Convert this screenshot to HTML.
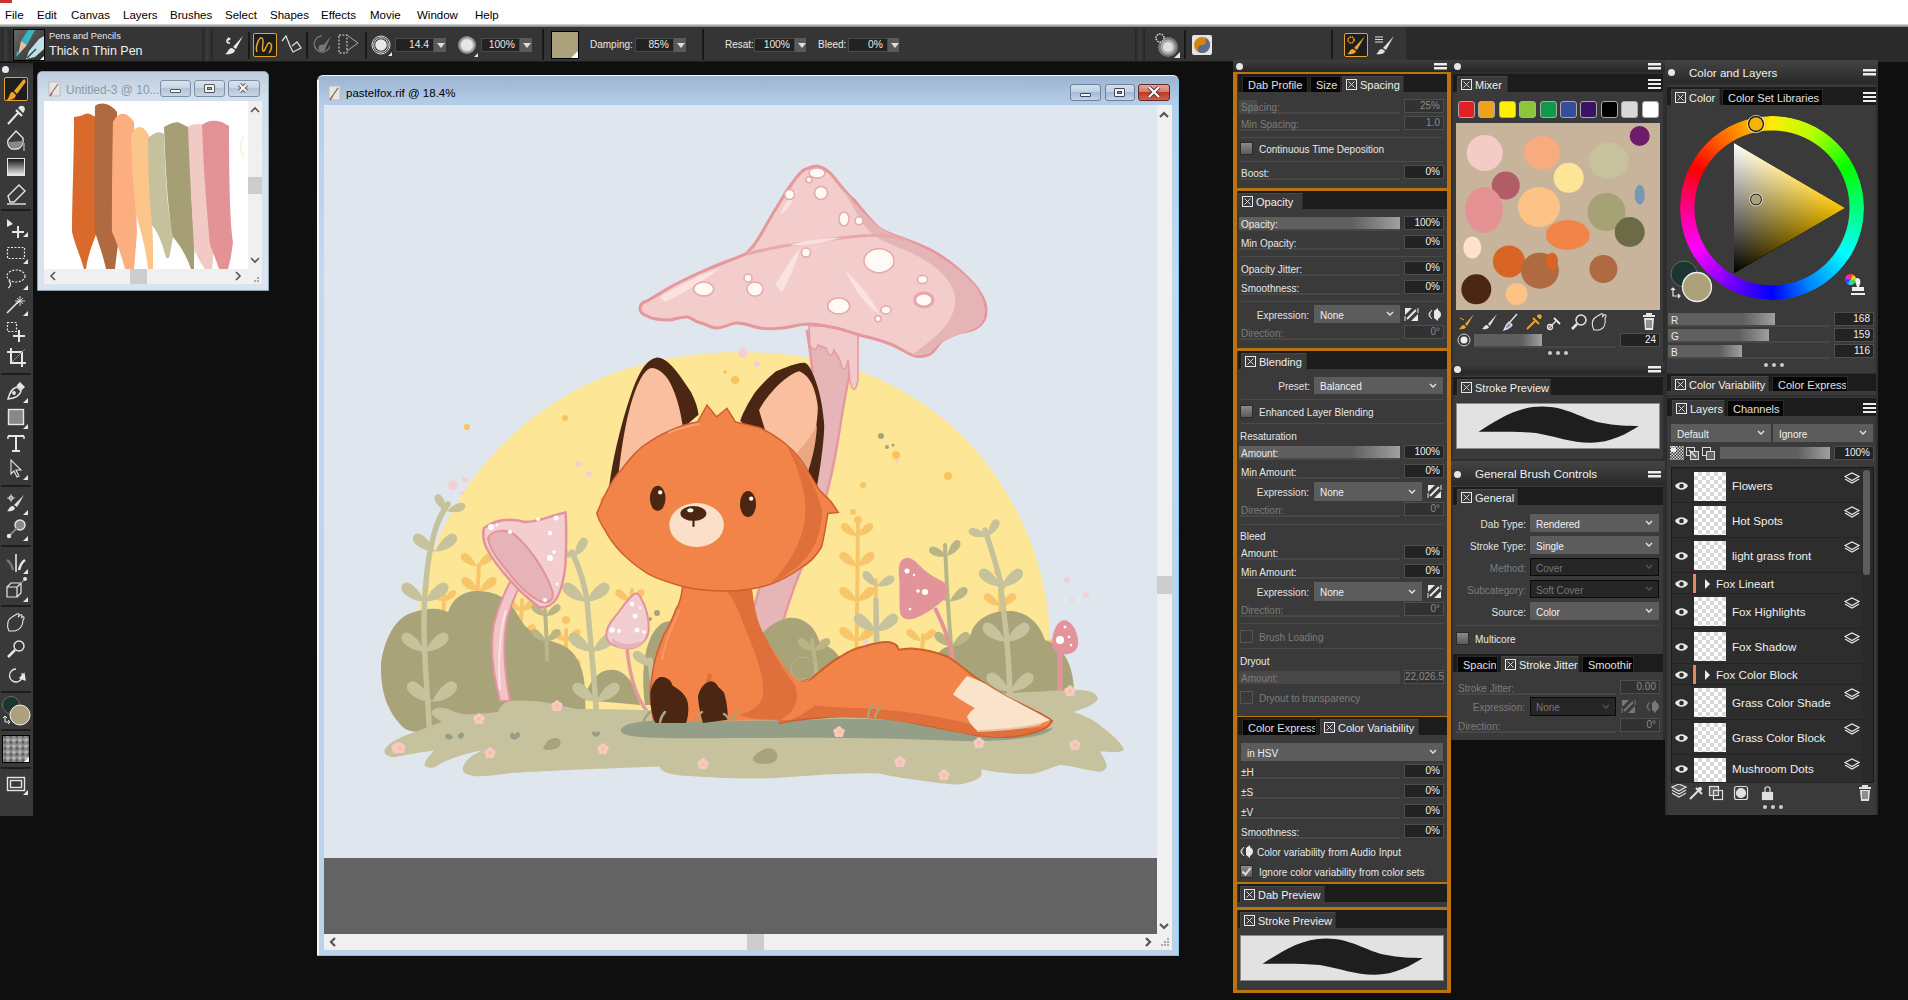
<!DOCTYPE html>
<html><head><meta charset="utf-8">
<style>
*{box-sizing:border-box;margin:0;padding:0}
html,body{width:1908px;height:1000px;overflow:hidden;background:#0f0f0f;font-family:"Liberation Sans",sans-serif;position:relative}
.a{position:absolute}
.t{position:absolute;white-space:nowrap;color:#e6e6e6;font-size:11px;line-height:12px}
#menu{left:0;top:0;width:1908px;height:25px;background:#fff;border-bottom:2px solid #8a8a8a}
#menu span{position:absolute;top:6px;font-size:13px;color:#000;line-height:15px}
#tb{left:0;top:27px;width:1908px;height:35px;background:#353535}
.sep{position:absolute;width:3px;background:#1a1a1a}
.inp{position:absolute;background:#222;border:1px solid #4a4a4a;color:#e8e8e8;font-size:10.3px;text-align:right;padding-right:4px;line-height:12px}
.dd{position:absolute;background:#5a5a5a}
.dd:after{content:"";position:absolute;left:3px;top:5px;border-left:4px solid transparent;border-right:4px solid transparent;border-top:5px solid #ddd}
</style></head><body>

<!-- MENU -->
<div class="a" style="left:0;top:0;width:1908px;height:24px;background:#fff"></div>
<div class="a" style="left:0;top:24px;width:1908px;height:3px;background:linear-gradient(#e0e0e0,#777)"></div>
<div class="a" style="left:0;top:0;width:12px;height:3px;background:#c33"></div>
<div class="t" style="top:8px;font-size:11.5px;line-height:14px;color:#000;left:5px">File</div>
<div class="t" style="top:8px;font-size:11.5px;line-height:14px;color:#000;left:37px">Edit</div>
<div class="t" style="top:8px;font-size:11.5px;line-height:14px;color:#000;left:71px">Canvas</div>
<div class="t" style="top:8px;font-size:11.5px;line-height:14px;color:#000;left:123px">Layers</div>
<div class="t" style="top:8px;font-size:11.5px;line-height:14px;color:#000;left:170px">Brushes</div>
<div class="t" style="top:8px;font-size:11.5px;line-height:14px;color:#000;left:225px">Select</div>
<div class="t" style="top:8px;font-size:11.5px;line-height:14px;color:#000;left:270px">Shapes</div>
<div class="t" style="top:8px;font-size:11.5px;line-height:14px;color:#000;left:321px">Effects</div>
<div class="t" style="top:8px;font-size:11.5px;line-height:14px;color:#000;left:370px">Movie</div>
<div class="t" style="top:8px;font-size:11.5px;line-height:14px;color:#000;left:417px">Window</div>
<div class="t" style="top:8px;font-size:11.5px;line-height:14px;color:#000;left:475px">Help</div>

<!-- TOOLBAR -->
<div id="tb" class="a"></div>
<!-- TOOLBAR DETAIL -->
<div class="a" style="left:0;top:27px;width:1406px;height:35px;background:#353535"></div>
<div class="a" style="left:1406px;top:27px;width:502px;height:35px;background:#2a2a2a"></div>
<div class="a" style="left:0;top:61px;width:1406px;height:1px;background:#1d1d1d"></div>
<div class="a" style="left:1px;top:29px;width:10px;height:32px;background:linear-gradient(90deg,#262626,#3c3c3c 50%,#262626)"></div>
<div class="a" style="left:202px;top:29px;width:11px;height:32px;background:linear-gradient(90deg,#262626,#3c3c3c 50%,#262626)"></div>
<div class="a" style="left:1135px;top:29px;width:10px;height:32px;background:linear-gradient(90deg,#262626,#3c3c3c 50%,#262626)"></div>
<!-- brush category icon -->
<svg class="a" style="left:13px;top:29px" width="32" height="32" viewBox="0 0 32 32">
<defs><linearGradient id="bg1" x1="0" y1="0" x2="1" y2="1"><stop offset="0" stop-color="#6a6a6a"/><stop offset="1" stop-color="#2c2c2c"/></linearGradient></defs>
<rect x="0.5" y="0.5" width="31" height="31" fill="url(#bg1)" stroke="#000"/>
<path d="M15 1 L22 1 L14 16 L8 12 Z" fill="#36b6c0"/>
<path d="M8 12 L14 16 L5 26 Z" fill="#e2c2a4"/>
<path d="M4 22 L7 24 L3 28 Z" fill="#36b6c0"/>
<path d="M26 10 L31 7 L31 20 L22 28 L13 30 L16 22 Z" fill="#bfe0e6"/>
<path d="M14 29 L23 20" stroke="#1d3a44" stroke-width="1.2"/>
<path d="M27 31 L31 27 L31 31 Z" fill="#fff"/>
</svg>
<div class="t" style="left:49px;top:31px;font-size:9.3px;line-height:11px;color:#e8e8e8">Pens and Pencils</div>
<div class="t" style="left:49px;top:44px;font-size:12.5px;line-height:14px;color:#f0f0f0">Thick n Thin Pen</div>
<!-- icons -->
<svg class="a" style="left:222px;top:33px" width="24" height="24" viewBox="0 0 24 24">
<path d="M21 3 L11 14 L14 16 Z" fill="#e8e8e8"/><path d="M10 15 C6 15 6 20 3 21 C8 22 13 20 13 17 Z" fill="#e8e8e8"/>
<path d="M8 6 C4 5 4 10 8 10" stroke="#e8e8e8" stroke-width="1.6" fill="none"/><path d="M6 4 L9 6 L6 8" fill="#e8e8e8"/>
</svg>
<div class="a" style="left:253px;top:33px;width:24px;height:24px;border:1.5px solid #e8a32e;background:#1e1e1e;border-radius:2px"></div>
<svg class="a" style="left:253px;top:33px" width="24" height="24" viewBox="0 0 24 24"><path d="M4 19 C2 14 6 3 9 5 C12 7 8 16 10 18 C12 20 14 8 17 10 C20 12 18 18 16 20" stroke="#e8a32e" stroke-width="1.5" fill="none"/></svg>
<svg class="a" style="left:281px;top:33px" width="22" height="24" viewBox="0 0 22 24"><path d="M1 8 L5 3 L9 13 L12 19 L20 15 L16 9 L11 13" stroke="#dcdcdc" stroke-width="1.3" fill="none"/></svg>
<div class="a" style="left:248px;top:32px;width:2px;height:27px;background:#1a1a1a"></div>
<div class="a" style="left:306px;top:32px;width:2px;height:27px;background:#1a1a1a"></div>
<div class="a" style="left:365px;top:32px;width:2px;height:27px;background:#1a1a1a"></div>
<svg class="a" style="left:313px;top:34px" width="20" height="20" viewBox="0 0 20 20"><path d="M9 2 A8 8 0 1 0 17 12" stroke="#777" stroke-width="1.3" fill="none"/><path d="M18 2 L9 13 L12 15 Z" fill="#777"/><circle cx="9" cy="14" r="3.5" fill="#777"/></svg>
<svg class="a" style="left:338px;top:34px" width="22" height="22" viewBox="0 0 22 22"><rect x="1" y="1" width="8" height="18" stroke="#e8e8e8" stroke-dasharray="2 1.5" fill="none"/><path d="M9 1 L20 9 L9 17" stroke="#aaa" stroke-width="1" fill="none"/></svg>
<svg class="a" style="left:371px;top:35px" width="22" height="22" viewBox="0 0 22 22"><circle cx="10" cy="10" r="9" stroke="#ddd" stroke-width="1" fill="none"/><circle cx="10" cy="10" r="7.3" stroke="#ddd" stroke-width="1" fill="none"/><circle cx="10" cy="10" r="5.8" fill="#e8e8e8"/><path d="M17 21 L21 17 L21 21 Z" fill="#e8e8e8"/></svg>
<div class="inp" style="left:395px;top:38px;width:39px;height:14px">14.4</div><div class="dd" style="left:434px;top:38px;width:12px;height:14px"></div>
<svg class="a" style="left:457px;top:36px" width="22" height="22" viewBox="0 0 22 22"><circle cx="10" cy="9" r="9" fill="#8a8a8a"/><circle cx="10" cy="9" r="7.5" fill="#b0b0b0"/><circle cx="10" cy="9" r="6" fill="#e6e6e6"/><path d="M17 21 L21 17 L21 21 Z" fill="#e8e8e8"/></svg>
<div class="inp" style="left:481px;top:38px;width:39px;height:14px">100%</div><div class="dd" style="left:520px;top:38px;width:12px;height:14px"></div>
<div class="a" style="left:542px;top:29px;width:2px;height:31px;background:#1a1a1a"></div>
<div class="a" style="left:551px;top:31px;width:28px;height:28px;background:#aba27b;border:1.5px solid #000"></div>
<svg class="a" style="left:571px;top:51px" width="7" height="7" viewBox="0 0 7 7"><path d="M0 7 L7 0 L7 7Z" fill="#fff"/></svg>
<div class="t" style="left:590px;top:39px;font-size:10px;color:#e8e8e8">Damping:</div>
<div class="inp" style="left:635px;top:38px;width:39px;height:14px">85%</div><div class="dd" style="left:674px;top:38px;width:12px;height:14px"></div>
<div class="a" style="left:702px;top:29px;width:2px;height:31px;background:#1a1a1a"></div>
<div class="t" style="left:725px;top:39px;font-size:10px;color:#e8e8e8">Resat:</div>
<div class="inp" style="left:754px;top:38px;width:41px;height:14px">100%</div><div class="dd" style="left:795px;top:38px;width:11px;height:14px"></div>
<div class="t" style="left:818px;top:39px;font-size:10px;color:#e8e8e8">Bleed:</div>
<div class="inp" style="left:848px;top:38px;width:40px;height:14px">0%</div><div class="dd" style="left:888px;top:38px;width:11px;height:14px"></div>
<svg class="a" style="left:1155px;top:33px" width="26" height="26" viewBox="0 0 26 26"><circle cx="13" cy="14" r="10" fill="#777"/><circle cx="13" cy="14" r="7.5" fill="#aaa"/><circle cx="13" cy="14" r="5" fill="#e0e0e0"/><circle cx="5" cy="5" r="4" fill="#353535" stroke="#ddd" stroke-width="1.5" stroke-dasharray="1.5 1"/><path d="M19 25 L25 19 L25 25 Z" fill="#e8e8e8"/></svg>
<div class="a" style="left:1184px;top:30px;width:2px;height:29px;background:#1a1a1a"></div>
<div class="a" style="left:1192px;top:35px;width:20px;height:20px;background:#e4e4e4;border-radius:2px"></div>
<svg class="a" style="left:1192px;top:35px" width="20" height="20" viewBox="0 0 20 20"><circle cx="10" cy="10" r="8" fill="#d4860f"/><path d="M10 2 A8 8 0 0 1 10 18 A4 4 0 0 1 10 10 A4 4 0 0 0 10 2 Z" fill="#5e6a8e"/></svg>
<div class="a" style="left:1331px;top:30px;width:2px;height:29px;background:#1a1a1a"></div>
<div class="a" style="left:1344px;top:33px;width:24px;height:24px;border:1.5px solid #e8a32e;background:#1e1e1e;border-radius:2px"></div>
<svg class="a" style="left:1344px;top:33px" width="24" height="24" viewBox="0 0 24 24"><path d="M21 3 L10 15 L13 17 Z" fill="#f0a32a"/><path d="M9 16 C5 16 6 20 3 21 C8 22 12 20 12 18 Z" fill="#f0a32a"/><circle cx="7" cy="7" r="3" stroke="#f0a32a" stroke-width="1.6" fill="none" stroke-dasharray="1.6 0.8"/></svg>
<svg class="a" style="left:1374px;top:34px" width="22" height="22" viewBox="0 0 22 22"><path d="M20 2 L9 14 L12 16 Z" fill="#e0e0e0"/><path d="M8 15 C4 15 5 19 2 20 C7 21 11 19 11 17 Z" fill="#e0e0e0"/><path d="M1 3 H9 M1 5.5 H9 M1 8 H9" stroke="#e0e0e0" stroke-width="1"/></svg>


<!-- LEFT TOOLBOX -->

<!-- TOOLBOX -->
<div class="a" style="left:0;top:63px;width:33px;height:753px;background:#393939"></div>
<div class="a" style="left:0;top:63px;width:33px;height:10px;background:linear-gradient(#2c2c2c,#3a3a3a)"></div>
<div class="a" style="left:2px;top:66px;width:7px;height:7px;border-radius:50%;background:#e8e8e8"></div>
<div class="a" style="left:4px;top:77px;width:24px;height:24px;border:1.5px solid #e8a32e;background:#1e1e1e;border-radius:2px"></div>
<svg class="a" style="left:0;top:63px" width="33" height="753" viewBox="0 63 33 753">
<g fill="none" stroke="#e6e6e6" stroke-width="1.4">
<!-- brush -->
<path d="M25 80 C26 81 26 82 25 83 L17 94 L14 91 L23 80 C24 79 25 79 25 80 Z" fill="#f0a32a" stroke="none"/><path d="M13 92 L16 95 C15 99 12 100 7 100 C9 98 9 96 10 94 C11 92 12 92 13 92 Z" fill="#f0a32a" stroke="none"/>
<!-- dropper -->
<path d="M8 124 L18 113" stroke-width="2"/><path d="M16 110 L22 116" stroke-width="2.2"/><path d="M19 108 C22 104 26 108 23 112 Z" fill="#e6e6e6"/>
<!-- bucket -->
<path d="M8 140 L16 131 L23 138 C24 143 21 149 16 149 L12 149 C9 148 7 144 8 140 Z"/><path d="M9 142 L23 141 C22 146 20 148 16 148 L12 148 C10 147 9 145 9 142 Z" fill="#888" stroke="none"/><path d="M24 143 L24 151" stroke="#999" stroke-width="1.6"/>
<!-- eraser -->
<path d="M8 196 L19 185 L25 191 L14 202 L10 202 Z"/><path d="M7 204 H26" />
<!-- transform -->
<path d="M7 219 L7 227 L13 224 Z" fill="#e6e6e6" stroke="none"/><path d="M18 226 V238 M12 232 H24" stroke-width="2"/><path d="M23 237 L28 232 L28 237 Z" fill="#e6e6e6" stroke="none"/>
<!-- rect select -->
<rect x="7.5" y="247.5" width="17" height="11" stroke-dasharray="2 1.5" stroke-width="1.2"/><path d="M23 264 L28 259 L28 264 Z" fill="#e6e6e6" stroke="none"/>
<!-- lasso -->
<ellipse cx="16" cy="276" rx="9" ry="6" stroke-dasharray="2 1.5" stroke-width="1.2"/><path d="M9 281 C12 284 10 287 8 288" stroke-width="1.2"/><path d="M23 290 L28 285 L28 290 Z" fill="#e6e6e6" stroke="none"/>
<!-- wand -->
<path d="M7 313 L19 301" stroke-width="1.6"/><path d="M20 296 V306 M15 301 H25 M17 298 L23 304 M23 298 L17 304" stroke-width="0.9"/><path d="M23 316 L28 311 L28 316 Z" fill="#e6e6e6" stroke="none"/>
<!-- sel adjust -->
<rect x="7.5" y="322.5" width="9" height="9" stroke-dasharray="2 1.5" stroke-width="1.2"/><path d="M19 330 V342 M13 336 H25" stroke-width="2"/>
<!-- crop -->
<path d="M11 348 V363 H26 M7 352 H22 V367" stroke-width="2"/><path d="M12 362 L25 349" stroke="#888" stroke-width="1"/>
<!-- pen -->
<path d="M8 399 C10 392 12 388 17 387 L21 391 C20 396 16 398 8 399 Z"/><path d="M17 386 L20 383 L24 387 L21 390" fill="#e6e6e6"/><circle cx="14" cy="393" r="1.2" fill="#e6e6e6"/><path d="M23 403 L28 398 L28 403 Z" fill="#e6e6e6" stroke="none"/>
<!-- rect shape -->
<rect x="8.5" y="409.5" width="15" height="15" fill="#888"/><path d="M23 429 L28 424 L28 429 Z" fill="#e6e6e6" stroke="none"/>
<!-- T -->
<path d="M8 436 H24 M16 436 V451 M12 451 H20" stroke-width="2"/><path d="M8 436 V439 M24 436 V439" stroke-width="1.5"/>
<!-- arrow -->
<path d="M11 460 L11 474 L14 471 L17 477 L19 476 L16 470 L21 470 Z" stroke-width="1.1"/><path d="M23 480 L28 475 L28 480 Z" fill="#e6e6e6" stroke="none"/>
<!-- clone brush -->
<path d="M24 495 L14 505 L17 507 Z" fill="#e6e6e6" stroke="none"/><path d="M13 506 C9 506 9 510 7 511 C11 512 15 510 15 508 Z" fill="#e6e6e6" stroke="none"/><circle cx="11" cy="498" r="2" stroke-width="1"/><path d="M11 494 V502 M7 498 H15" stroke-width="0.8"/><path d="M23 515 L28 510 L28 515 Z" fill="#e6e6e6" stroke="none"/>
<!-- cloner -->
<circle cx="20" cy="525" r="5" fill="#888"/><path d="M9 536 L17 528" stroke="#888" stroke-width="1.8"/><circle cx="9" cy="536" r="2.2" fill="#e6e6e6" stroke="none"/><path d="M23 541 L28 536 L28 541 Z" fill="#e6e6e6" stroke="none"/>
<!-- symmetry -->
<path d="M16 554 V572" stroke-width="1.6"/><path d="M7 560 C10 562 12 566 13 570" stroke="#777" stroke-width="2.5"/><path d="M25 560 C22 562 20 566 19 570" stroke-width="2.5"/><path d="M23 574 L28 569 L28 574 Z" fill="#e6e6e6" stroke="none"/>
<!-- cube -->
<path d="M7 587 H17 V597 H7 Z M7 587 L11 583 H21 L17 587 M21 583 V593 L17 597" stroke-width="1.2"/><path d="M20 584 L25 579" stroke="#aaa" stroke-dasharray="1.5 1.5"/><circle cx="25" cy="579" r="2" fill="#e6e6e6" stroke="none"/><path d="M23 602 L28 597 L28 602 Z" fill="#e6e6e6" stroke="none"/>
<!-- hand -->
<path d="M9 631 C6 625 8 619 12 617 L17 614 C19 613 20 615 18 617 L20 615 C22 614 23 616 21 618 L22 617 C24 616 25 618 23 620 C23 625 20 630 15 631 Z" stroke-width="1.1"/>
<!-- magnifier -->
<circle cx="19" cy="646" r="5"/><path d="M15 650 L8 657" stroke-width="2.5"/>
<!-- rotate -->
<path d="M22 673 A6.5 6.5 0 1 1 16 669" stroke-width="1.3"/><path d="M20 678 L24 674 L25 680 Z" fill="#e6e6e6"/>
<!-- screen mode -->
<rect x="7.5" y="777.5" width="17" height="13"/><rect x="10.5" y="780.5" width="11" height="7"/><path d="M23 795 L28 790 L28 795 Z" fill="#e6e6e6" stroke="none"/>
</g>
<!-- gradient rect -->
<defs><linearGradient id="grd" x1="0" y1="0" x2="0" y2="1"><stop offset="0" stop-color="#111"/><stop offset="1" stop-color="#f0f0f0"/></linearGradient>
<pattern id="ppr" width="6" height="6" patternUnits="userSpaceOnUse"><rect width="6" height="6" fill="#8a8a8a"/><circle cx="2" cy="2" r="1.6" fill="#bdbdbd"/><circle cx="5" cy="4.5" r="1.4" fill="#5e5e5e"/></pattern></defs>
<rect x="7.5" y="158.5" width="17" height="17" fill="url(#grd)" stroke="#e6e6e6"/>
<!-- seps -->
<g fill="#1d1d1d"><rect x="1" y="209" width="30" height="2"/><rect x="1" y="373" width="30" height="2"/><rect x="1" y="485" width="30" height="2"/><rect x="1" y="545" width="30" height="2"/><rect x="1" y="605" width="30" height="2"/><rect x="1" y="691" width="30" height="2"/><rect x="1" y="729" width="30" height="2"/><rect x="1" y="767" width="30" height="2"/></g>
<!-- colors -->
<circle cx="11" cy="705" r="8.5" fill="#1b3532" stroke="#777" stroke-width="0.8"/>
<circle cx="20" cy="715" r="10" fill="#aba27b" stroke="#eee" stroke-width="1"/>
<path d="M5 716 V722 H10 M3 718 L5 716 L7 718 M8 720 L10 722 L8 724" stroke="#e6e6e6" stroke-width="1" fill="none"/>
<rect x="2.5" y="735.5" width="27" height="27" fill="url(#ppr)" stroke="#000"/>
<path d="M24 762 L29 757 L29 762 Z" fill="#fff"/>
</svg>



<!-- UNTITLED WINDOW -->
<!-- UNTITLED WINDOW -->
<div class="a" style="left:37px;top:71px;width:232px;height:220px;background:linear-gradient(#bccddf,#d3e0ec 25px,#d9e4ef);border-radius:5px 5px 0 0;border:1px solid #8ea3b8"></div>
<svg class="a" style="left:48px;top:81px" width="14" height="16" viewBox="0 0 14 16"><path d="M1 1 H12 V15 H1 Z" fill="#e6e6e6" stroke="#bbb"/><path d="M3 13 L10 3" stroke="#9a6a5a" stroke-width="1.2"/><path d="M2 15 L4 12" stroke="#d44" stroke-width="1.5"/></svg>
<div class="t" style="left:66px;top:83px;font-size:12px;line-height:14px;color:#8e98a4">Untitled-3 @ 10...</div>
<div class="a" style="left:160px;top:80px;width:31px;height:17px;border:1px solid #7f90a4;border-radius:3px;background:linear-gradient(#dae4ef,#c5d3e2 50%,#b2c4d8 50%,#c9d7e6)"></div>
<div class="a" style="left:194px;top:80px;width:31px;height:17px;border:1px solid #7f90a4;border-radius:3px;background:linear-gradient(#dae4ef,#c5d3e2 50%,#b2c4d8 50%,#c9d7e6)"></div>
<div class="a" style="left:228px;top:80px;width:32px;height:17px;border:1px solid #7f90a4;border-radius:3px;background:linear-gradient(#dae4ef,#c5d3e2 50%,#b2c4d8 50%,#c9d7e6)"></div>
<div class="a" style="left:170px;top:89px;width:11px;height:4px;background:#f4f4f4;border:1px solid #555;border-radius:1px"></div>
<div class="a" style="left:204px;top:84px;width:11px;height:9px;background:#f4f4f4;border:1px solid #555;border-radius:1px"></div>
<div class="a" style="left:207px;top:87px;width:5px;height:3px;background:#8aa;border:1px solid #555"></div>
<svg class="a" style="left:236px;top:82px" width="14" height="12" viewBox="0 0 14 12"><path d="M3.5 2.5 L10.5 9.5 M10.5 2.5 L3.5 9.5" stroke="#555" stroke-width="4.2"/><path d="M3.5 2.5 L10.5 9.5 M10.5 2.5 L3.5 9.5" stroke="#f4f4f4" stroke-width="2.4"/></svg>
<div class="a" style="left:44px;top:101px;width:204px;height:168px;background:#fff;overflow:hidden">
<svg width="204" height="168" viewBox="44 101 204 168">
<path d="M90 114 C86 112 82 116 80 116 L74 117 C74 160 72 200 72 232 C75 245 80 255 84 269 L86 269 C88 255 92 245 97 232 C97 200 97 160 97 118 Z" fill="#d96a2b"/>
<path d="M95 106 C103 100 113 106 117 112 C117 160 118 200 120 232 C118 245 116 258 115 269 L106 269 C103 255 99 245 95 232 C94 200 94 160 95 106 Z" fill="#b06a42"/>
<path d="M113 122 C118 112 126 110 134 122 C136 170 136 210 137 232 C136 245 135 258 134 269 L125 269 C121 255 118 245 112 232 C112 200 112 170 113 122 Z" fill="#fdae80"/>
<path d="M131 135 C136 124 144 124 150 138 C151 190 152 220 153 245 L153 269 L148 269 C146 250 141 230 136 215 C134 190 132 170 131 135 Z" fill="#fcc58a"/>
<path d="M148 138 C154 133 158 130 164 134 C166 190 168 220 174 232 C172 242 170 255 169 258 L166 258 C163 245 158 232 152 225 C150 200 148 180 148 138 Z" fill="#c5c19c"/>
<path d="M164 127 C170 124 176 120 182 124 L190 128 C191 190 192 220 195 240 C194 250 194 262 194 269 L191 269 C186 255 180 245 173 237 C168 210 166 180 164 127 Z" fill="#a69f75"/>
<path d="M188 127 C194 123 200 124 206 125 C208 200 210 230 214 248 C213 255 213 262 212 269 L205 269 C200 262 196 255 194 248 C192 210 190 180 188 127 Z" fill="#f2cac5"/>
<path d="M202 125 C208 120 214 120 222 122 L229 126 C229 200 231 230 233 242 C232 252 230 262 228 269 L219 269 C216 260 213 252 210 245 C207 210 204 180 202 125 Z" fill="#e39396"/>
<path d="M244 136 C240 140 240 150 243 157" stroke="#fbeed0" stroke-width="1.5" fill="none"/>
</svg>
</div>
<!-- scrollbars -->
<div class="a" style="left:248px;top:101px;width:14px;height:168px;background:#f0f0f0"></div>
<div class="a" style="left:248px;top:177px;width:14px;height:17px;background:#cdcdcd"></div>
<div class="a" style="left:44px;top:269px;width:204px;height:15px;background:#f0f0f0"></div>
<div class="a" style="left:130px;top:269px;width:17px;height:15px;background:#cdcdcd"></div>
<div class="a" style="left:248px;top:269px;width:14px;height:15px;background:#f0f0f0"></div>
<svg class="a" style="left:0;top:0" width="280" height="300" viewBox="0 0 280 300">
<g stroke="#555" stroke-width="1.6" fill="none"><path d="M251 112 L255 108 L259 112"/><path d="M251 258 L255 262 L259 258"/><path d="M55 272 L51 276 L55 280"/><path d="M236 272 L240 276 L236 280"/></g>
<g fill="#aaa"><rect x="257" y="280" width="2" height="2"/><rect x="254" y="280" width="2" height="2"/><rect x="257" y="277" width="2" height="2"/></g>
</svg>



<!-- MAIN CANVAS WINDOW -->
<div class="a" style="left:317px;top:75px;width:862px;height:881px;background:linear-gradient(#9cb4d1,#b6cfe9 30px,#c4d8ee 200px,#bcd3ea 600px,#bcd2ea);border-radius:6px 6px 0 0;border:1px solid #7fc3ea;border-top-color:#f4f8fc"></div>
<div class="a" style="left:317px;top:80px;width:1.5px;height:875px;background:#f5f8fb"></div>
<svg class="a" style="left:328px;top:85px" width="14" height="16" viewBox="0 0 14 16"><path d="M1 1 H12 V15 H1 Z" fill="#e6e6e6" stroke="#bbb"/><path d="M3 13 L10 3" stroke="#7a5a4a" stroke-width="1.2"/><path d="M2 15 L4 12" stroke="#d44" stroke-width="1.5"/></svg>
<div class="t" style="left:346px;top:86px;font-size:11.5px;line-height:15px;color:#000">pastelfox.rif @ 18.4%</div>
<div class="a" style="left:1070px;top:84px;width:31px;height:17px;border:1px solid #6f8196;border-radius:3px;background:linear-gradient(#d3dff0,#bdd0e6 50%,#a3bbd6 50%,#c1d4ea)"></div>
<div class="a" style="left:1105px;top:84px;width:30px;height:17px;border:1px solid #6f8196;border-radius:3px;background:linear-gradient(#d3dff0,#bdd0e6 50%,#a3bbd6 50%,#c1d4ea)"></div>
<div class="a" style="left:1138px;top:84px;width:32px;height:17px;border:1px solid #5a2a2a;border-radius:3px;background:linear-gradient(#e7a89c,#d77a69 45%,#bf3a22 50%,#d0604a)"></div>
<div class="a" style="left:1080px;top:93px;width:11px;height:4px;background:#f4f4f4;border:1px solid #445;border-radius:1px"></div>
<div class="a" style="left:1114px;top:88px;width:11px;height:9px;background:#f4f4f4;border:1px solid #445;border-radius:1px"></div>
<div class="a" style="left:1117px;top:91px;width:5px;height:3px;background:#7b90aa;border:1px solid #445"></div>
<svg class="a" style="left:1147px;top:86px" width="14" height="12" viewBox="0 0 14 12"><path d="M2 1 L12 11 M12 1 L2 11" stroke="#5a3030" stroke-width="4"/><path d="M2 1 L12 11 M12 1 L2 11" stroke="#fafafa" stroke-width="2.2"/></svg>
<div class="a" style="left:324px;top:105px;width:833px;height:754px;background:#dfe6ed"></div>

<div class="a" style="left:324px;top:858px;width:833px;height:76px;background:#636363"></div>
<div class="a" style="left:1157px;top:105px;width:15px;height:829px;background:#f0f0f0"></div>
<div class="a" style="left:1157px;top:576px;width:15px;height:18px;background:#cdcdcd"></div>
<div class="a" style="left:324px;top:934px;width:848px;height:16px;background:#f0f0f0"></div>
<div class="a" style="left:747px;top:934px;width:17px;height:16px;background:#cdcdcd"></div>
<svg class="a" style="left:0;top:0" width="1200" height="960" viewBox="0 0 1200 960">
<g stroke="#555" stroke-width="2.2" fill="none"><path d="M1160 117 L1164 113 L1168 117"/><path d="M1160 924 L1164 928 L1168 924"/><path d="M335 938 L331 942 L335 946"/><path d="M1146 938 L1150 942 L1146 946"/></g>
<g fill="#aaa"><rect x="1167" y="944" width="2" height="2"/><rect x="1164" y="944" width="2" height="2"/><rect x="1167" y="941" width="2" height="2"/><rect x="1161" y="944" width="2" height="2"/><rect x="1164" y="941" width="2" height="2"/><rect x="1167" y="938" width="2" height="2"/></g>
</svg>


<!--ILLUS-->
<svg class="a" style="left:0;top:0" width="1908" height="1000" viewBox="0 0 1908 1000">
<defs><clipPath id="cv"><rect x="324" y="105" width="833" height="753"/></clipPath>
<g id="lf"><path d="M0 1 C-3 -5 -7 -10 -11 -11 C-15 -11 -16 -7 -13 -4 C-10 -1 -5 1 0 1 Z"/><path d="M0 1 C3 -5 7 -10 11 -11 C15 -11 16 -7 13 -4 C10 -1 5 1 0 1 Z"/></g>
<g id="fl"><circle cx="0" cy="-3.2" r="2.6"/><circle cx="3" cy="-1" r="2.6"/><circle cx="1.9" cy="2.6" r="2.6"/><circle cx="-1.9" cy="2.6" r="2.6"/><circle cx="-3" cy="-1" r="2.6"/><circle cx="0" cy="0" r="1.8" fill="#f8c46c"/></g>
</defs>
<g clip-path="url(#cv)">
<rect x="324" y="105" width="833" height="753" fill="#dfe6ed"/>
<!-- sun -->
<path d="M412 720 L416 633 C420 520 520 352 740 352 C960 352 1045 520 1050 633 L1056 720 Z" fill="#fde797"/>
<!-- dots -->
<g fill="#f3d0d2"><circle cx="743" cy="353" r="5"/><circle cx="757" cy="364" r="3"/><circle cx="453" cy="485" r="5"/><circle cx="465" cy="480" r="3"/><circle cx="462" cy="493" r="2"/><circle cx="578" cy="464" r="3"/><circle cx="589" cy="474" r="3"/><circle cx="866" cy="643" r="3"/><circle cx="1067" cy="580" r="3"/><circle cx="1086" cy="595" r="3"/><circle cx="1072" cy="600" r="2"/><circle cx="467" cy="607" r="4"/><circle cx="897" cy="461" r="2"/></g>
<g fill="#f9c35e"><circle cx="565" cy="418" r="3"/><circle cx="735" cy="380" r="4"/><circle cx="725" cy="372" r="2"/><circle cx="896" cy="455" r="4"/><circle cx="948" cy="476" r="4"/><circle cx="863" cy="485" r="3"/><circle cx="603" cy="500" r="3"/><circle cx="467" cy="427" r="3"/></g>
<g fill="#a6a27a"><circle cx="881" cy="436" r="3"/><circle cx="887" cy="447" r="2"/><circle cx="893" cy="445" r="1.5"/><circle cx="657" cy="613" r="3"/><circle cx="650" cy="619" r="2"/></g>
<!-- yellow plants behind -->
<g stroke="#f8c66a" stroke-width="4" fill="none" stroke-linecap="round">
<path d="M443 640 L444 595"/><path d="M476 620 L479 565"/><path d="M566 700 L566 630"/><path d="M628 640 L632 590"/><path d="M856 700 L858 525"/><path d="M875 700 L876 580"/><path d="M1000 700 L1000 590"/><path d="M920 690 L923 635"/><path d="M520 650 L522 600"/><path d="M810 700 L812 640"/><path d="M1040 690 L1042 640"/>
</g>
<g fill="#f8c66a">
<use href="#lf" transform="translate(443 600) scale(0.9)"/><use href="#lf" transform="translate(443 622) scale(0.9)"/>
<use href="#lf" transform="translate(477 565) scale(1.1)"/><use href="#lf" transform="translate(479 590) scale(1.2)"/>
<use href="#lf" transform="translate(566 640) scale(1)"/><use href="#lf" transform="translate(566 670) scale(1)"/>
<use href="#lf" transform="translate(630 600) scale(1)"/><use href="#lf" transform="translate(630 625) scale(1)"/>
<use href="#lf" transform="translate(857 535) scale(1.1)"/><use href="#lf" transform="translate(857 565) scale(1.2)"/><use href="#lf" transform="translate(857 600) scale(1.2)"/><use href="#lf" transform="translate(857 640) scale(1.2)"/><use href="#lf" transform="translate(857 680) scale(1.2)"/>
<use href="#lf" transform="translate(1000 605) scale(1.1)"/><use href="#lf" transform="translate(1000 640) scale(1.2)"/><use href="#lf" transform="translate(1000 675) scale(1.2)"/>
<use href="#lf" transform="translate(921 640) scale(1)"/><use href="#lf" transform="translate(921 670) scale(1)"/>
<use href="#lf" transform="translate(521 610) scale(1)"/><use href="#lf" transform="translate(521 635) scale(1)"/>
<use href="#lf" transform="translate(811 650) scale(1)"/><use href="#lf" transform="translate(1041 650) scale(1)"/>
<circle cx="566" cy="620" r="4"/><circle cx="858" cy="520" r="4"/><circle cx="853" cy="512" r="3"/><circle cx="1003" cy="585" r="4"/><circle cx="997" cy="572" r="3"/>
</g>
<!-- big mushroom stem -->
<path d="M807 331 C812 360 816 400 814 440 C808 500 780 545 762 580 C752 610 746 640 742 690 L772 690 C776 640 785 610 800 572 C818 530 830 490 838 440 C844 400 852 360 859 331 Z" fill="#e6b5b8" stroke="#e69aa0" stroke-width="2.5"/>
<path d="M809 326 L858 326 L858 380 C856 392 852 393 850 380 L848 360 C846 372 842 372 840 360 L834 350 C832 358 828 356 826 348 L818 345 C816 352 812 350 810 345 Z" fill="#f2cacb" stroke="#e69aa0" stroke-width="1.5"/>
<!-- bushes -->
<g fill="#a8a378">
<path d="M445 730 C425 733 410 733 404 728 C390 715 380 695 381 664 C384 640 395 618 411 613 C430 607 440 608 448 612 C452 598 465 590 479 591 C500 592 510 600 522 622 C530 634 548 640 560 644 C575 650 584 665 585 690 L586 740 Z"/>
<path d="M645 705 C640 670 645 630 665 622 C680 618 690 630 690 660 L690 705 Z"/>
<path d="M735 715 C735 670 755 625 788 618 C805 616 818 630 820 645 C835 645 850 660 850 715 Z"/>
<path d="M930 715 C925 680 930 650 950 646 C962 644 970 640 972 630 C980 615 995 610 1012 611 C1030 613 1040 625 1045 640 C1060 645 1073 660 1074 690 L1074 715 Z"/>
<path d="M585 700 C588 680 600 668 615 670 C628 672 638 690 640 705 Z"/>
</g>
<!-- light olive plants -->
<g stroke="#c6c29c" stroke-width="5.5" fill="none" stroke-linecap="round">
<path d="M430 740 C428 700 424 660 424 624 C424 590 428 560 431 547 C435 525 442 512 448 504"/>
<path d="M597 725 C595 680 590 640 587 600 C584 580 578 565 572 552"/>
<path d="M660 720 C655 700 652 680 650 660"/>
<path d="M880 705 C878 670 876 640 876 600"/>
<path d="M1010 710 C1010 660 1005 620 1000 580 C995 560 990 545 985 530"/>

</g>
<g stroke="#b9b587" stroke-width="4" fill="none" stroke-linecap="round"><path d="M955 690 C952 660 948 620 945 545"/><path d="M820 700 C818 680 815 660 812 640"/><path d="M547 660 C547 640 546 625 545 610"/></g>
<g fill="#b9b587"><use href="#lf" transform="translate(947 555) rotate(-15) scale(1.1)"/><use href="#lf" transform="translate(950 600) scale(1.2)"/><use href="#lf" transform="translate(952 645) scale(1.2)"/><use href="#lf" transform="translate(814 650) scale(1.1)"/><use href="#lf" transform="translate(817 690) scale(1.1)"/><use href="#lf" transform="translate(546 615) scale(1)"/><use href="#lf" transform="translate(546 640) scale(1)"/></g>
<g fill="#c6c29c">
<use href="#lf" transform="translate(447 510) rotate(20) scale(1.1)"/><use href="#lf" transform="translate(435 550) scale(1.5)"/><use href="#lf" transform="translate(425 600) scale(1.6)"/><use href="#lf" transform="translate(425 650) scale(1.6)"/><use href="#lf" transform="translate(432 700) scale(1.7)"/>
<use href="#lf" transform="translate(574 555) rotate(-20) scale(1.2)"/><use href="#lf" transform="translate(586 600) scale(1.6)"/><use href="#lf" transform="translate(592 650) scale(1.6)"/><use href="#lf" transform="translate(596 700) scale(1.6)"/>
<use href="#lf" transform="translate(652 665) scale(1.3)"/>
<use href="#lf" transform="translate(877 585) rotate(10) scale(1.1)"/><use href="#lf" transform="translate(876 630) scale(1.5)"/><use href="#lf" transform="translate(878 670) scale(1.5)"/>
<use href="#lf" transform="translate(987 535) rotate(-20) scale(1.1)"/><use href="#lf" transform="translate(1001 585) scale(1.5)"/><use href="#lf" transform="translate(1006 640) scale(1.6)"/><use href="#lf" transform="translate(1010 690) scale(1.6)"/>

</g>
<!-- big mushroom cap -->
<path d="M817 166 C828 168 833 176 836 180 C842 188 848 195 855 201 C862 210 866 215 871 220 C875 225 878 228 882 230 C890 234 896 236 904 239 C915 243 922 246 931 250 C942 256 950 262 958 269 C966 276 972 282 977 288 C982 296 986 302 986 309 C986 316 985 320 982 323 C978 328 973 330 968 331 C960 333 955 334 950 336 C945 338 942 340 939 344 C935 350 932 354 928 355 C922 357 915 357 912 355 C905 352 898 347 890 344 C880 340 872 338 863 336 C852 333 845 330 836 328 C826 326 818 324 809 324 C800 324 792 327 782 328 C774 329 766 329 760 328 C752 327 744 322 736 323 C728 324 724 328 717 328 C710 328 706 324 701 323 C695 322 692 318 688 317 C680 316 675 320 669 320 C660 320 652 319 647 316 C642 314 640 312 640 309 C640 305 643 302 647 301 C656 296 665 290 674 285 C684 280 692 276 701 272 C710 268 720 264 728 261 C736 258 742 256 747 253 C752 248 756 243 760 236 C766 226 771 216 777 207 C782 198 787 190 793 182 C798 175 802 170 806 169 C810 167 813 166 817 166 Z" fill="#f3cdcb" stroke="#e5979b" stroke-width="3"/>
<path d="M836 180 C848 195 860 210 871 220 C878 228 890 234 904 239 C930 250 958 265 977 288 C986 302 987 318 980 325 C970 333 955 334 939 344 C932 352 922 357 912 355 C930 340 950 330 955 305 C958 285 940 265 905 250 C880 240 870 235 862 222 C852 205 845 192 836 180 Z" fill="#e5b4b6"/>
<path d="M747 254 C780 245 820 240 860 236 C880 234 895 236 905 240" stroke="#e7a9ac" stroke-width="3" fill="none"/>
<g fill="#fbe5e3" opacity="0.9"><path d="M660 297 C680 285 700 275 720 268 C705 280 685 292 665 302 Z"/><path d="M775 285 C785 270 790 260 800 248 C797 262 790 278 782 292 Z"/><path d="M845 270 C855 280 870 295 880 315 C865 305 855 290 845 270 Z"/><path d="M790 245 C805 240 822 238 840 238 C822 243 805 246 790 245 Z"/><path d="M780 215 C784 205 790 195 797 190 C794 200 788 210 780 215 Z"/></g>
<g fill="#fffaf6" stroke="#e8a7aa" stroke-width="1.5">
<ellipse cx="879" cy="260.7" rx="15" ry="12"/><ellipse cx="703.7" cy="289" rx="10" ry="7"/><ellipse cx="755" cy="289" rx="8" ry="7"/><ellipse cx="748" cy="278" rx="4" ry="4"/><ellipse cx="838.7" cy="306" rx="11" ry="8"/><ellipse cx="923.8" cy="299.9" rx="9" ry="7" stroke-width="3"/><ellipse cx="922.5" cy="279.6" rx="5" ry="4"/><ellipse cx="821" cy="193" rx="6.5" ry="6.5"/><ellipse cx="789.6" cy="194.6" rx="5" ry="5"/><ellipse cx="844" cy="219" rx="5" ry="7"/><ellipse cx="859" cy="220.8" rx="4" ry="4"/><ellipse cx="806" cy="252.6" rx="4.5" ry="4.5"/><ellipse cx="817" cy="173" rx="8" ry="5"/><ellipse cx="809" cy="179.7" rx="3" ry="3"/><ellipse cx="886" cy="309.9" rx="5" ry="4"/><ellipse cx="878" cy="318.8" rx="3" ry="3"/>
</g>
<!-- left tilted mushroom -->
<path d="M524 559 C512 575 500 600 494 624 C490 645 492 670 500 701 L510 701 C504 670 503 645 506 624 C511 600 522 580 534 563 Z" fill="#f0c4c8" stroke="#e3939a" stroke-width="2"/>
<path d="M500 690 C498 660 500 630 506 610" stroke="#fbe3e5" stroke-width="2" fill="none"/>
<path d="M484 528 C495 520 510 518 525 522 C540 522 552 515 565.5 512.4 C567 530 566 550 565.5 564 C564 580 560 595 553.5 602.4 C548 607 543 608 539 607 C530 600 522 593 515 585.6 C505 575 496 565 488.8 552 C484 545 482 538 484 528 Z" fill="#f3cdcf" stroke="#e3939a" stroke-width="2.5"/>
<path d="M488 538 C492 530 505 528 515 535 C530 548 545 570 552 590 C555 598 550 604 542 602 C530 597 518 585 508 572 C498 560 490 550 488 538 Z" fill="#e5b3b8" stroke="#e3939a" stroke-width="2"/>
<g fill="#fff"><circle cx="491" cy="527" r="3"/><circle cx="497" cy="525" r="1.5"/><circle cx="510" cy="532" r="2"/><circle cx="550" cy="533" r="2.2"/><circle cx="550" cy="558" r="3"/><circle cx="554" cy="552" r="1.8"/><circle cx="557" cy="584" r="1.5"/><circle cx="545" cy="600" r="2"/><circle cx="538" cy="519" r="2"/><circle cx="556" cy="518" r="2.5"/></g>
<!-- small mushroom -->
<path d="M627 648 C630 680 638 700 647 711" stroke="#e69aa0" stroke-width="3.5" fill="none"/>
<path d="M634.6 593.6 C628 598 622 608 614 618 C608 625 606 630 606.3 636 C607 643 615 648 628.3 648.6 C640 648 648 640 648.7 630 C649 620 648 610 641 598.3 C639 594 637 593 634.6 593.6 Z" fill="#f2cdcf" stroke="#e3939a" stroke-width="2"/>
<path d="M612 638 C620 645 630 646 645 640 C640 648 630 650 620 648 C615 646 612 642 612 638 Z" fill="#e4b4b9"/>
<g fill="#fff"><circle cx="632" cy="604" r="2.2"/><circle cx="635" cy="616" r="2.5"/><circle cx="612" cy="630" r="2.8"/><circle cx="619" cy="631" r="2"/><circle cx="637" cy="630" r="2.5"/><circle cx="644" cy="632" r="1.8"/><circle cx="640" cy="608" r="1.2"/></g>
<!-- right pink mushrooms -->
<path d="M935 608 C943 625 950 640 953 660" stroke="#e3939a" stroke-width="4" fill="none"/>
<path d="M906 558 C900 559 898 566 899 575 C900 585 899 600 900 612 C901 619 908 621 916 618 C926 614 938 606 945 598 C950 590 947 583 940 580 C932 576 926 572 920 566 C915 561 911 557 906 558 Z" fill="#e3939a"/>
<g fill="#fff"><circle cx="907" cy="571" r="2.5"/><circle cx="918" cy="591" r="1.8"/><circle cx="925" cy="592" r="3"/><circle cx="910" cy="609" r="1.3"/><circle cx="914" cy="575" r="1.2"/></g>
<path d="M1060 650 L1060 690" stroke="#e3939a" stroke-width="5" stroke-linecap="round"/>
<path d="M1064 620 C1056 622 1052 632 1052 645 C1052 652 1060 655 1068 654 C1075 653 1079 648 1078 640 C1077 630 1072 621 1064 620 Z" fill="#e3939a"/>
<g fill="#fff"><circle cx="1060" cy="640" r="4"/><circle cx="1065" cy="627" r="1.5"/><circle cx="1069" cy="637" r="1.3"/><circle cx="1071" cy="645" r="1.2"/></g>
<!-- ground -->
<path d="M384.4 750.4 C388 744 394 739 418 731 C430 726 438 724 442 721.6 C435 718 430 714 432 711 C436 706 445 707 455 712 C465 716 480 714 498 712 C500 706 503 703 510 701 C520 700 535 701 546 702.4 C560 705 570 708 580 709 C610 709 630 710 660 710.4 L700 711 C800 706 900 700 990 694.4 C1030 692 1060 690 1078 690 C1090 690 1098 694 1097.8 698.8 C1095 705 1085 708 1073.6 712 C1085 716 1094 720 1100 725.2 C1108 732 1120 740 1124 749.4 C1122 753 1112 752 1100 751.6 C1103 757 1107 762 1106.6 767 C1104 772 1100 772 1097.8 771.4 C1085 770 1072 766 1060.4 764.8 C1050 768 1042 772 1034 773.6 C1015 775 995 772 981.2 769.2 C982 773 982 776 979 778 C972 782 965 784 957 784.6 C940 784 920 780 902 778 C890 776 885 775 880 773.6 C850 772 820 775 790 777 C750 780 720 778 690 776 C670 775 660 772 660 766.4 C620 768 590 769 578 769.6 C550 771 530 772 514 772.8 C500 774 485 777 474 776 C466 775 462 772 462.8 768 C465 760 472 755 482 750.4 C470 752 450 758 440 764 C436 767 432 768 430.8 768 C426 767 424 766 424.4 764.8 C425 760 430 755 434 750.4 C420 752 405 755 395 757 C388 757 384 754 384.4 750.4 Z" fill="#c6c29d"/>
<!-- ground details -->
<g fill="#959d86"><path d="M453 737 C450 733 447 733 445 736 C446 740 450 741 453 737 Z M458 735 C461 731 464 732 464 736 C462 740 458 740 458 735 Z"/><path d="M515 735 C513 731 510 732 510 736 C512 741 516 741 520 736 C520 731 517 731 515 735Z"/><path d="M596 733 C594 730 592 731 592 734 C594 737 597 738 600 734 C600 731 598 731 596 733Z"/></g>
<path d="M545 745 C548 738 558 736 560 740 C562 746 558 750 548 750 C543 750 542 748 545 745 Z" fill="#a8a378"/>
<path d="M753 758 C760 748 772 745 776 752 C780 758 775 764 765 764 C758 764 752 762 753 758 Z" fill="#a8a378"/>
<path d="M815 722 C818 720 828 722 832 726" stroke="#959d86" stroke-width="1.2" fill="none"/>
<!-- ground shadow -->
<path d="M622 728 C630 720 660 720 700 721 C760 721 790 720 830 719 C880 718 940 722 1000 728 C1030 732 1050 730 1053 727 C1050 738 1000 742 960 741 C900 738 820 737 760 738 C700 738 660 739 640 737 C625 736 618 733 622 728 Z" fill="#959e86"/>
<!-- fox tail -->
<path d="M780 685 C790 684 800 682 810.4 679.3 C820 672 830 662 840.8 656.5 C848 652 856 648 863.6 646.6 C872 644 880 642 886.4 642 C892 642 895 644 897 645.8 L898.6 649.6 C905 649 910 648 916.8 648.9 C928 650 938 653 947.2 656.5 C955 661 962 667 970 673.2 C978 679 985 684 992.8 688.4 C1000 694 1008 698 1017 702 C1025 706 1033 710 1041.4 714.2 C1046 717 1050 719 1052 721 C1050 725 1045 729 1038.4 731 C1030 734 1020 736 1008 737 C998 737 988 736.5 977.6 735.5 C968 733 958 731 947.2 729.4 C935 727 925 725 916.8 723.4 C900 720 885 718 871.2 717.3 C855 716 840 716 825.6 717.3 C815 718 805 719 795.2 720.3 C790 721 785 722 780 723.4 Z" fill="#f2844a" stroke="#cc5f2c" stroke-width="2"/>
<path d="M760 700 C790 702 830 708 860 708 C900 710 940 716 970 724 C1000 730 1030 730 1045 726 C1035 733 1015 737 995 737 C970 735 950 730 925 725 C890 719 850 716 820 717.3 C805 718 790 720 780 723 Z" fill="#e0703b"/>

<path d="M967 676 C960 684 956 690 953 694.5 C960 700 968 704 974.6 708 C970 712 968 715 967 717 C970 724 974 728 977.6 731 C1000 731 1020 728 1038.4 725 C1044 722 1048 721 1050 720 C1040 714 1028 708 1017 702 C1008 697 1000 693 992.8 688.4 C985 683 976 679 967 676 Z" fill="#f9e3cb"/>
<path d="M977 731 C1000 730 1025 728 1040 724" stroke="#e8c3a8" stroke-width="2" fill="none"/>
<!-- fox body -->
<path d="M682.7 586 C681 600 679 605 676 609 C672 620 668 628 664 634.6 C660 645 657 652 655.5 658.4 C653 668 652 675 651.3 680.5 C650 690 650 700 651.3 706 C652 712 653 718 653.8 721.4 L790 720 C800 716 810 710 818 702 L818 676 C812 682 806 684 800 681 C790 675 783 665 778 657 C772 648 768 642 766 638 C760 628 756 620 754 612.5 C753 600 752 592 751.6 586 Z" fill="#f2844a"/>
<path d="M682.7 586 C681 600 679 605 676 609 C672 620 668 628 664 634.6 C660 645 657 652 655.5 658.4 C653 668 652 675 651.3 680.5 C650 690 650 700 651.3 706 C652 712 653 718 653.8 721.4" fill="none" stroke="#cc5f2c" stroke-width="1.5"/>
<path d="M727 592 C735 600 740 615 748 635 C758 660 765 680 762.6 697.6 C760 706 750 712 740.5 714.6 C745 718 760 720 780 720 C795 712 800 700 795 685 C793 682 791 680 790 678 C780 665 772 650 766 638 C758 625 755 612 751.6 586 Z" fill="#e0703b"/>
<path d="M662 660 C665 640 672 625 680 610" stroke="#f7a172" stroke-width="2" fill="none" opacity="0.7"/>
<path d="M710 674 C706 690 704 705 708 720" stroke="#e0703b" stroke-width="4" fill="none"/>
<!-- paws -->
<path d="M660.6 677 C668 676 672 682 672.5 685.6 C680 690 686 695 687.8 702.7 C689 710 688 718 686 723 L655.5 723 C652 715 650 705 650.4 692.4 C652 684 656 678 660.6 677 Z" fill="#4b2713"/>
<path d="M710 681.4 C714 681 717 684 718.4 687.3 C722 690 725 693 725 695.9 C727 703 728 712 727.8 719.7 L703 723 C700 712 698 702 698 695.9 C700 688 705 682 710 681.4 Z" fill="#4b2713"/>
<!-- grass tufts near paws -->
<g stroke="#a8a378" stroke-width="2.5" fill="none" stroke-linecap="round"><path d="M643 722 C645 716 648 714 650 712"/><path d="M660 722 C661 717 663 714 665 712"/><path d="M698 722 C698 716 700 713 702 712"/><path d="M733 720 C734 715 736 713 738 712"/><path d="M730 722 C728 717 726 715 724 714"/><path d="M868 718 C868 712 870 708 872 705"/><path d="M875 718 C876 712 878 709 881 708"/></g>
<!-- ears -->
<path d="M608.6 492 C612 460 622 420 632 391.5 C638 375 645 360 656.6 357.4 C668 357 680 375 690.7 391.5 C695 400 698 408 698.5 414.7 L683 428 L618 480 Z" fill="#4b2713"/>
<path d="M618 480 C622 440 628 410 635 391.5 C640 378 646 368 652 368 C660 368 668 378 670.6 383.7 C676 395 680 407 683 428 Z" fill="#f9bf9e"/>
<path d="M816 492 C822 460 825 430 824 422.5 C822 400 818 385 812 372 C809 365 806 362.8 803.9 362.8 C795 363 785 368 776 371.3 C765 380 755 392 752.7 396 C747 405 742 415 740.3 421 L800 470 Z" fill="#4b2713"/>
<path d="M807 475 C815 440 818 415 817.8 407 C816 390 810 375 799 371.3 C790 373 770 390 759 410 L768 440 L800 470 Z" fill="#f9bf9e"/>
<path d="M817 425 C816 445 812 460 807 475 L795 455 C805 445 812 435 817 425 Z" fill="#e9a783"/>
<!-- head -->
<path d="M596.8 513.4 L603 498.7 C610 485 615 475 622 469 C630 458 640 448 643 446 C655 438 662 434 668 431.5 C680 426 690 423 697.6 422 L707 405 L716.5 416.8 L727 408.4 L735.4 422 C745 424 752 426 758.5 427.3 C770 432 778 438 785.8 444 C795 452 802 460 806.8 469.3 C812 478 816 485 819.5 490.3 C825 496 830 500 832 503 L838.3 512.4 L827.8 513.4 C826 525 824 538 821.5 547 C815 558 808 564 800.5 568 C790 576 780 581 769 584.8 C755 589 740 591 727 591 C712 591 698 590 685 587 C670 583 660 580 649 574.3 C638 568 630 561 622 553.3 C614 545 609 538 605 530.2 C601 524 598 518 596.8 513.4 Z" fill="#f2844a" stroke="#cc5f2c" stroke-width="1.5"/>
<path d="M785.8 444 C800 460 815 480 822 510 C822 540 810 565 769 584.8 C795 560 808 530 805 500 C802 480 795 460 785.8 444 Z" fill="#e0703b"/>
<path d="M668 433 C680 428 690 425 700 424" stroke="#f7a172" stroke-width="2" fill="none"/>
<!-- face -->
<ellipse cx="696.6" cy="525" rx="27.3" ry="22" fill="#fae0c8"/>
<ellipse cx="657.7" cy="498.3" rx="7.8" ry="12.6" fill="#4b2713"/>
<ellipse cx="748" cy="504" rx="8" ry="13" fill="#4b2713"/>
<circle cx="660.2" cy="492.4" r="2.1" fill="#fff"/><circle cx="751.2" cy="498.7" r="2.1" fill="#fff"/>
<ellipse cx="693.4" cy="513.4" rx="13" ry="7.4" fill="#4b2713"/>
<rect x="692.4" y="517" width="2.2" height="10" rx="1" fill="#4b2713"/>
<ellipse cx="690.3" cy="510.3" rx="3" ry="2" fill="#fff"/>
<!-- watermark -->
<circle cx="803" cy="669" r="12" fill="none" stroke="#c9c49a" stroke-width="0.8" opacity="0.6"/>
<!-- flowers on ground -->
<g fill="#f6c9c8">
<use href="#fl" transform="translate(397 748)"/><use href="#fl" transform="translate(479 719)"/><use href="#fl" transform="translate(490 753)"/><use href="#fl" transform="translate(603 749)"/><use href="#fl" transform="translate(557 706)"/><use href="#fl" transform="translate(703 764)"/><use href="#fl" transform="translate(839 732)"/><use href="#fl" transform="translate(900 762)"/><use href="#fl" transform="translate(979 743)"/><use href="#fl" transform="translate(944 775)"/><use href="#fl" transform="translate(1075 745)"/><use href="#fl" transform="translate(1070 691)"/><use href="#fl" transform="translate(400 748)"/>
</g>
</g>
</svg>
<!--/ILLUS-->

<!-- PANELS -->
<div class="a" style="left:1233px;top:60px;width:218px;height:12px;background:linear-gradient(#3e3e3e,#262626)"></div>
<div class="a" style="left:1236px;top:62.5px;width:7px;height:7px;border-radius:50%;background:#e6e6e6"></div>
<svg class="a" style="left:1434px;top:63.0px" width="13" height="7" viewBox="0 0 13 7"><rect y="0" width="13" height="2.5" fill="#eee"/><rect y="4" width="13" height="2.5" fill="#eee"/></svg>
<div class="a" style="left:1233px;top:72px;width:218px;height:921px;background:#bb730d"></div>
<div class="a" style="left:1237px;top:74px;width:210px;height:114px;background:#3a3a3a"></div>
<div class="a" style="left:1238px;top:74px;width:209px;height:18px;background:#1c1c1c"></div>
<div class="a" style="left:1242px;top:76px;width:66px;height:16px;background:#060606;border:1px solid #2a2a2a;border-bottom:none"></div>
<div class="t" style="left:1248px;top:78.0px;font-size:11px;line-height:14px;color:#e0e0e0;width:58px;overflow:hidden">Dab Profile</div>
<div class="a" style="left:1310px;top:76px;width:31px;height:16px;background:#060606;border:1px solid #2a2a2a;border-bottom:none"></div>
<div class="t" style="left:1316px;top:78.0px;font-size:11px;line-height:14px;color:#e0e0e0;width:23px;overflow:hidden">Size</div>
<div class="a" style="left:1342px;top:76px;width:62px;height:16px;background:#3a3a3a;border-top:1px solid #474747;border-left:1px solid #444;border-right:1px solid #2e2e2e"></div>
<svg class="a" style="left:1346px;top:79px" width="11" height="11" viewBox="0 0 11 11"><rect x="0.5" y="0.5" width="10" height="10" fill="none" stroke="#e8e8e8" stroke-width="1"/><path d="M2.5 2.5 L8.5 8.5 M8.5 2.5 L2.5 8.5" stroke="#e8e8e8" stroke-width="0.9"/></svg>
<div class="t" style="left:1360px;top:78.0px;font-size:11px;line-height:14px;color:#f0f0f0;">Spacing</div>
<div class="a" style="left:1239px;top:100px;width:18px;height:12px;background:#4a4a4a"></div>
<div class="a" style="left:1239px;top:112px;width:161px;height:2px;background:#474747"></div>
<div class="t" style="left:1241px;top:100.5px;font-size:10px;line-height:14px;color:#7c7c7c;">Spacing:</div>
<div class="a" style="left:1404px;top:99px;width:40px;height:14px;background:#323232;border:1px solid #4e4e4e;color:#8a8a8a;font-size:10px;line-height:12px;text-align:right;padding-right:3px;white-space:nowrap">25%</div>
<div class="a" style="left:1239px;top:129px;width:161px;height:2px;background:#474747"></div>
<div class="t" style="left:1241px;top:117.5px;font-size:10px;line-height:14px;color:#7c7c7c;">Min Spacing:</div>
<div class="a" style="left:1404px;top:116px;width:40px;height:14px;background:#323232;border:1px solid #4e4e4e;color:#8a8a8a;font-size:10px;line-height:12px;text-align:right;padding-right:3px;white-space:nowrap">1.0</div>
<div class="a" style="left:1241px;top:137px;width:202px;height:1px;background:#4a4a4a"></div>
<div class="a" style="left:1240px;top:142px;width:13px;height:13px;background:linear-gradient(#8a8a8a,#5a5a5a);border:1px solid #2a2a2a"></div>
<div class="t" style="left:1259px;top:142.5px;font-size:10px;line-height:14px;color:#e8e8e8;">Continuous Time Deposition</div>
<div class="a" style="left:1241px;top:161px;width:202px;height:1px;background:#4a4a4a"></div>
<div class="a" style="left:1239px;top:178px;width:161px;height:2px;background:#474747"></div>
<div class="t" style="left:1241px;top:166.5px;font-size:10px;line-height:14px;color:#e8e8e8;">Boost:</div>
<div class="a" style="left:1404px;top:165px;width:40px;height:14px;background:#232323;border:1px solid #4e4e4e;color:#f0f0f0;font-size:10px;line-height:12px;text-align:right;padding-right:3px;white-space:nowrap">0%</div>
<div class="a" style="left:1237px;top:191px;width:210px;height:157px;background:#3a3a3a"></div>
<div class="a" style="left:1238px;top:191px;width:209px;height:18px;background:#1c1c1c"></div>
<div class="a" style="left:1238px;top:193px;width:65px;height:16px;background:#3a3a3a;border-top:1px solid #474747;border-left:1px solid #444;border-right:1px solid #2e2e2e"></div>
<svg class="a" style="left:1242px;top:196px" width="11" height="11" viewBox="0 0 11 11"><rect x="0.5" y="0.5" width="10" height="10" fill="none" stroke="#e8e8e8" stroke-width="1"/><path d="M2.5 2.5 L8.5 8.5 M8.5 2.5 L2.5 8.5" stroke="#e8e8e8" stroke-width="0.9"/></svg>
<div class="t" style="left:1256px;top:195.0px;font-size:11px;line-height:14px;color:#f0f0f0;">Opacity</div>
<div class="a" style="left:1239px;top:217px;width:161px;height:12px;background:linear-gradient(90deg,#5f5f5f 70%,#a0a0a0)"></div>
<div class="a" style="left:1239px;top:229px;width:161px;height:2px;background:#474747"></div>
<div class="t" style="left:1241px;top:217.5px;font-size:10px;line-height:14px;color:#e8e8e8;">Opacity:</div>
<div class="a" style="left:1404px;top:216px;width:40px;height:14px;background:#232323;border:1px solid #4e4e4e;color:#f0f0f0;font-size:10px;line-height:12px;text-align:right;padding-right:3px;white-space:nowrap">100%</div>
<div class="a" style="left:1239px;top:248px;width:161px;height:2px;background:#474747"></div>
<div class="t" style="left:1241px;top:236.5px;font-size:10px;line-height:14px;color:#e8e8e8;">Min Opacity:</div>
<div class="a" style="left:1404px;top:235px;width:40px;height:14px;background:#232323;border:1px solid #4e4e4e;color:#f0f0f0;font-size:10px;line-height:12px;text-align:right;padding-right:3px;white-space:nowrap">0%</div>
<div class="a" style="left:1241px;top:256px;width:202px;height:1px;background:#4a4a4a"></div>
<div class="a" style="left:1239px;top:274px;width:161px;height:2px;background:#474747"></div>
<div class="t" style="left:1241px;top:262.5px;font-size:10px;line-height:14px;color:#e8e8e8;">Opacity Jitter:</div>
<div class="a" style="left:1404px;top:261px;width:40px;height:14px;background:#232323;border:1px solid #4e4e4e;color:#f0f0f0;font-size:10px;line-height:12px;text-align:right;padding-right:3px;white-space:nowrap">0%</div>
<div class="a" style="left:1239px;top:293px;width:161px;height:2px;background:#474747"></div>
<div class="t" style="left:1241px;top:281.5px;font-size:10px;line-height:14px;color:#e8e8e8;">Smoothness:</div>
<div class="a" style="left:1404px;top:280px;width:40px;height:14px;background:#232323;border:1px solid #4e4e4e;color:#f0f0f0;font-size:10px;line-height:12px;text-align:right;padding-right:3px;white-space:nowrap">0%</div>
<div class="a" style="left:1241px;top:301px;width:202px;height:1px;background:#4a4a4a"></div>
<div class="t" style="left:1009px;width:300px;text-align:right;top:308.5px;font-size:10px;line-height:14px;color:#e2e2e2">Expression:</div>
<div class="a" style="left:1314px;top:305px;width:86px;height:18px;background:#5c5c5c"></div>
<div class="t" style="left:1320px;top:308.5px;font-size:10px;line-height:14px;color:#f0f0f0;">None</div>
<svg class="a" style="left:1386px;top:311.0px" width="8" height="6" viewBox="0 0 8 6"><path d="M1 1 L4 4 L7 1" stroke="#e8e8e8" stroke-width="1.3" fill="none"/></svg>
<svg class="a" style="left:1404px;top:307px" width="15" height="15" viewBox="0 0 15 15"><path d="M1 1 H14 V14 H1 Z" fill="none" stroke="#e8e8e8" stroke-width="0"/><path d="M1 1 L8 1 L1 8 Z M14 14 L7 14 L14 7 Z" fill="#e8e8e8"/><path d="M3 12 L12 3" stroke="#e8e8e8" stroke-width="2"/><path d="M1 14 L1 9 M14 1 L14 6" stroke="#e8e8e8" stroke-width="1"/></svg>
<svg class="a" style="left:1428px;top:307px" width="15" height="15" viewBox="0 0 15 15"><path d="M6 4 L10 1 V14 L6 11 Z" fill="#e8e8e8"/><path d="M10 3 C14 5 14 10 10 12" fill="#e8e8e8"/><path d="M4 3 C1 6 1 9 4 12 M2.5 4.5 C0.5 6.5 0.5 8.5 2.5 10.5" stroke="#e8e8e8" stroke-width="1" fill="none"/></svg>
<div class="a" style="left:1239px;top:338px;width:161px;height:2px;background:#474747"></div>
<div class="t" style="left:1241px;top:326.5px;font-size:10px;line-height:14px;color:#7c7c7c;">Direction:</div>
<div class="a" style="left:1404px;top:325px;width:40px;height:14px;background:#323232;border:1px solid #4e4e4e;color:#8a8a8a;font-size:10px;line-height:12px;text-align:right;padding-right:3px;white-space:nowrap">0°</div>
<div class="a" style="left:1237px;top:351px;width:210px;height:365px;background:#3a3a3a"></div>
<div class="a" style="left:1238px;top:351px;width:209px;height:18px;background:#1c1c1c"></div>
<div class="a" style="left:1241px;top:353px;width:66px;height:16px;background:#3a3a3a;border-top:1px solid #474747;border-left:1px solid #444;border-right:1px solid #2e2e2e"></div>
<svg class="a" style="left:1245px;top:356px" width="11" height="11" viewBox="0 0 11 11"><rect x="0.5" y="0.5" width="10" height="10" fill="none" stroke="#e8e8e8" stroke-width="1"/><path d="M2.5 2.5 L8.5 8.5 M8.5 2.5 L2.5 8.5" stroke="#e8e8e8" stroke-width="0.9"/></svg>
<div class="t" style="left:1259px;top:355.0px;font-size:11px;line-height:14px;color:#f0f0f0;">Blending</div>
<div class="t" style="left:1010px;width:300px;text-align:right;top:379.5px;font-size:10px;line-height:14px;color:#e2e2e2">Preset:</div>
<div class="a" style="left:1314px;top:377px;width:129px;height:17px;background:#5c5c5c"></div>
<div class="t" style="left:1320px;top:380.0px;font-size:10px;line-height:14px;color:#f0f0f0;">Balanced</div>
<svg class="a" style="left:1429px;top:382.5px" width="8" height="6" viewBox="0 0 8 6"><path d="M1 1 L4 4 L7 1" stroke="#e8e8e8" stroke-width="1.3" fill="none"/></svg>
<div class="a" style="left:1241px;top:399px;width:202px;height:1px;background:#4a4a4a"></div>
<div class="a" style="left:1240px;top:405px;width:13px;height:13px;background:linear-gradient(#8a8a8a,#5a5a5a);border:1px solid #2a2a2a"></div>
<div class="t" style="left:1259px;top:405.5px;font-size:10px;line-height:14px;color:#e8e8e8;">Enhanced Layer Blending</div>
<div class="a" style="left:1241px;top:423px;width:202px;height:1px;background:#4a4a4a"></div>
<div class="t" style="left:1240px;top:429.5px;font-size:10px;line-height:14px;color:#e8e8e8;">Resaturation</div>
<div class="a" style="left:1239px;top:446px;width:161px;height:12px;background:linear-gradient(90deg,#5f5f5f 70%,#a0a0a0)"></div>
<div class="a" style="left:1239px;top:458px;width:161px;height:2px;background:#474747"></div>
<div class="t" style="left:1241px;top:446.5px;font-size:10px;line-height:14px;color:#e8e8e8;">Amount:</div>
<div class="a" style="left:1404px;top:445px;width:40px;height:14px;background:#232323;border:1px solid #4e4e4e;color:#f0f0f0;font-size:10px;line-height:12px;text-align:right;padding-right:3px;white-space:nowrap">100%</div>
<div class="a" style="left:1239px;top:477px;width:161px;height:2px;background:#474747"></div>
<div class="t" style="left:1241px;top:465.5px;font-size:10px;line-height:14px;color:#e8e8e8;">Min Amount:</div>
<div class="a" style="left:1404px;top:464px;width:40px;height:14px;background:#232323;border:1px solid #4e4e4e;color:#f0f0f0;font-size:10px;line-height:12px;text-align:right;padding-right:3px;white-space:nowrap">0%</div>
<div class="t" style="left:1009px;width:300px;text-align:right;top:485.5px;font-size:10px;line-height:14px;color:#e2e2e2">Expression:</div>
<div class="a" style="left:1314px;top:482px;width:108px;height:19px;background:#5c5c5c"></div>
<div class="t" style="left:1320px;top:486.0px;font-size:10px;line-height:14px;color:#f0f0f0;">None</div>
<svg class="a" style="left:1408px;top:488.5px" width="8" height="6" viewBox="0 0 8 6"><path d="M1 1 L4 4 L7 1" stroke="#e8e8e8" stroke-width="1.3" fill="none"/></svg>
<svg class="a" style="left:1427px;top:484px" width="15" height="15" viewBox="0 0 15 15"><path d="M1 1 H14 V14 H1 Z" fill="none" stroke="#e8e8e8" stroke-width="0"/><path d="M1 1 L8 1 L1 8 Z M14 14 L7 14 L14 7 Z" fill="#e8e8e8"/><path d="M3 12 L12 3" stroke="#e8e8e8" stroke-width="2"/><path d="M1 14 L1 9 M14 1 L14 6" stroke="#e8e8e8" stroke-width="1"/></svg>
<div class="a" style="left:1239px;top:515px;width:161px;height:2px;background:#474747"></div>
<div class="t" style="left:1241px;top:503.5px;font-size:10px;line-height:14px;color:#7c7c7c;">Direction:</div>
<div class="a" style="left:1404px;top:502px;width:40px;height:14px;background:#323232;border:1px solid #4e4e4e;color:#8a8a8a;font-size:10px;line-height:12px;text-align:right;padding-right:3px;white-space:nowrap">0°</div>
<div class="a" style="left:1241px;top:524px;width:202px;height:1px;background:#4a4a4a"></div>
<div class="t" style="left:1240px;top:529.5px;font-size:10px;line-height:14px;color:#e8e8e8;">Bleed</div>
<div class="a" style="left:1239px;top:558px;width:161px;height:2px;background:#474747"></div>
<div class="t" style="left:1241px;top:546.5px;font-size:10px;line-height:14px;color:#e8e8e8;">Amount:</div>
<div class="a" style="left:1404px;top:545px;width:40px;height:14px;background:#232323;border:1px solid #4e4e4e;color:#f0f0f0;font-size:10px;line-height:12px;text-align:right;padding-right:3px;white-space:nowrap">0%</div>
<div class="a" style="left:1239px;top:577px;width:161px;height:2px;background:#474747"></div>
<div class="t" style="left:1241px;top:565.5px;font-size:10px;line-height:14px;color:#e8e8e8;">Min Amount:</div>
<div class="a" style="left:1404px;top:564px;width:40px;height:14px;background:#232323;border:1px solid #4e4e4e;color:#f0f0f0;font-size:10px;line-height:12px;text-align:right;padding-right:3px;white-space:nowrap">0%</div>
<div class="t" style="left:1009px;width:300px;text-align:right;top:585.5px;font-size:10px;line-height:14px;color:#e2e2e2">Expression:</div>
<div class="a" style="left:1314px;top:582px;width:108px;height:19px;background:#5c5c5c"></div>
<div class="t" style="left:1320px;top:586.0px;font-size:10px;line-height:14px;color:#f0f0f0;">None</div>
<svg class="a" style="left:1408px;top:588.5px" width="8" height="6" viewBox="0 0 8 6"><path d="M1 1 L4 4 L7 1" stroke="#e8e8e8" stroke-width="1.3" fill="none"/></svg>
<svg class="a" style="left:1427px;top:584px" width="15" height="15" viewBox="0 0 15 15"><path d="M1 1 H14 V14 H1 Z" fill="none" stroke="#e8e8e8" stroke-width="0"/><path d="M1 1 L8 1 L1 8 Z M14 14 L7 14 L14 7 Z" fill="#e8e8e8"/><path d="M3 12 L12 3" stroke="#e8e8e8" stroke-width="2"/><path d="M1 14 L1 9 M14 1 L14 6" stroke="#e8e8e8" stroke-width="1"/></svg>
<div class="a" style="left:1239px;top:615px;width:161px;height:2px;background:#474747"></div>
<div class="t" style="left:1241px;top:603.5px;font-size:10px;line-height:14px;color:#7c7c7c;">Direction:</div>
<div class="a" style="left:1404px;top:602px;width:40px;height:14px;background:#323232;border:1px solid #4e4e4e;color:#8a8a8a;font-size:10px;line-height:12px;text-align:right;padding-right:3px;white-space:nowrap">0°</div>
<div class="a" style="left:1241px;top:623px;width:202px;height:1px;background:#4a4a4a"></div>
<div class="a" style="left:1240px;top:630px;width:13px;height:13px;background:#3a3a3a;border:1px solid #555"></div>
<div class="t" style="left:1259px;top:630.5px;font-size:10px;line-height:14px;color:#7c7c7c;">Brush Loading</div>
<div class="a" style="left:1241px;top:648px;width:202px;height:1px;background:#4a4a4a"></div>
<div class="t" style="left:1240px;top:654.5px;font-size:10px;line-height:14px;color:#e8e8e8;">Dryout</div>
<div class="a" style="left:1239px;top:671px;width:161px;height:13px;background:#484848"></div>
<div class="t" style="left:1241px;top:671.5px;font-size:10px;line-height:14px;color:#7c7c7c;">Amount:</div>
<div class="a" style="left:1404px;top:670px;width:40px;height:14px;background:#323232;border:1px solid #4e4e4e;color:#8a8a8a;font-size:10px;line-height:12px;text-align:right;padding-right:3px;white-space:nowrap">22,026.5</div>
<div class="a" style="left:1240px;top:691px;width:13px;height:13px;background:#3a3a3a;border:1px solid #555"></div>
<div class="t" style="left:1259px;top:691.5px;font-size:10px;line-height:14px;color:#7c7c7c;">Dryout to transparency</div>
<div class="a" style="left:1237px;top:717px;width:210px;height:165px;background:#3a3a3a"></div>
<div class="a" style="left:1238px;top:717px;width:209px;height:18px;background:#1c1c1c"></div>
<div class="a" style="left:1242px;top:719px;width:75px;height:16px;background:#060606;border:1px solid #2a2a2a;border-bottom:none"></div>
<div class="t" style="left:1248px;top:721.0px;font-size:11px;line-height:14px;color:#e0e0e0;width:67px;overflow:hidden">Color Expressi</div>
<div class="a" style="left:1320px;top:719px;width:99px;height:16px;background:#3a3a3a;border-top:1px solid #474747;border-left:1px solid #444;border-right:1px solid #2e2e2e"></div>
<svg class="a" style="left:1324px;top:722px" width="11" height="11" viewBox="0 0 11 11"><rect x="0.5" y="0.5" width="10" height="10" fill="none" stroke="#e8e8e8" stroke-width="1"/><path d="M2.5 2.5 L8.5 8.5 M8.5 2.5 L2.5 8.5" stroke="#e8e8e8" stroke-width="0.9"/></svg>
<div class="t" style="left:1338px;top:721.0px;font-size:11px;line-height:14px;color:#f0f0f0;">Color Variability</div>
<div class="a" style="left:1241px;top:743px;width:202px;height:18px;background:#5c5c5c"></div>
<div class="t" style="left:1247px;top:746.5px;font-size:10px;line-height:14px;color:#f0f0f0;">in HSV</div>
<svg class="a" style="left:1429px;top:749.0px" width="8" height="6" viewBox="0 0 8 6"><path d="M1 1 L4 4 L7 1" stroke="#e8e8e8" stroke-width="1.3" fill="none"/></svg>
<div class="a" style="left:1239px;top:777px;width:161px;height:2px;background:#474747"></div>
<div class="t" style="left:1241px;top:765.5px;font-size:10px;line-height:14px;color:#e8e8e8;">±H</div>
<div class="a" style="left:1404px;top:764px;width:40px;height:14px;background:#232323;border:1px solid #4e4e4e;color:#f0f0f0;font-size:10px;line-height:12px;text-align:right;padding-right:3px;white-space:nowrap">0%</div>
<div class="a" style="left:1239px;top:797px;width:161px;height:2px;background:#474747"></div>
<div class="t" style="left:1241px;top:785.5px;font-size:10px;line-height:14px;color:#e8e8e8;">±S</div>
<div class="a" style="left:1404px;top:784px;width:40px;height:14px;background:#232323;border:1px solid #4e4e4e;color:#f0f0f0;font-size:10px;line-height:12px;text-align:right;padding-right:3px;white-space:nowrap">0%</div>
<div class="a" style="left:1239px;top:817px;width:161px;height:2px;background:#474747"></div>
<div class="t" style="left:1241px;top:805.5px;font-size:10px;line-height:14px;color:#e8e8e8;">±V</div>
<div class="a" style="left:1404px;top:804px;width:40px;height:14px;background:#232323;border:1px solid #4e4e4e;color:#f0f0f0;font-size:10px;line-height:12px;text-align:right;padding-right:3px;white-space:nowrap">0%</div>
<div class="a" style="left:1239px;top:837px;width:161px;height:2px;background:#474747"></div>
<div class="t" style="left:1241px;top:825.5px;font-size:10px;line-height:14px;color:#e8e8e8;">Smoothness:</div>
<div class="a" style="left:1404px;top:824px;width:40px;height:14px;background:#232323;border:1px solid #4e4e4e;color:#f0f0f0;font-size:10px;line-height:12px;text-align:right;padding-right:3px;white-space:nowrap">0%</div>
<svg class="a" style="left:1240px;top:844px" width="15" height="15" viewBox="0 0 15 15"><path d="M6 4 L10 1 V14 L6 11 Z" fill="#e8e8e8"/><path d="M10 3 C14 5 14 10 10 12" fill="#e8e8e8"/><path d="M4 3 C1 6 1 9 4 12 M2.5 4.5 C0.5 6.5 0.5 8.5 2.5 10.5" stroke="#e8e8e8" stroke-width="1" fill="none"/></svg>
<div class="t" style="left:1257px;top:845.5px;font-size:10px;line-height:14px;color:#e8e8e8;">Color variability from Audio Input</div>
<div class="a" style="left:1240px;top:865px;width:13px;height:13px;background:linear-gradient(#8a8a8a,#5a5a5a);border:1px solid #2a2a2a"></div>
<svg class="a" style="left:1240px;top:865px" width="13" height="13" viewBox="0 0 13 13"><path d="M2.5 6.5 L5.5 9.5 L10.5 3" stroke="#e0e0e0" stroke-width="2" fill="none"/></svg>
<div class="t" style="left:1259px;top:865.5px;font-size:10px;line-height:14px;color:#e8e8e8;">Ignore color variability from color sets</div>
<div class="a" style="left:1237px;top:884px;width:210px;height:23px;background:#3a3a3a"></div>
<div class="a" style="left:1238px;top:884px;width:209px;height:18px;background:#1c1c1c"></div>
<div class="a" style="left:1240px;top:886px;width:85px;height:16px;background:#3a3a3a;border-top:1px solid #474747;border-left:1px solid #444;border-right:1px solid #2e2e2e"></div>
<svg class="a" style="left:1244px;top:889px" width="11" height="11" viewBox="0 0 11 11"><rect x="0.5" y="0.5" width="10" height="10" fill="none" stroke="#e8e8e8" stroke-width="1"/><path d="M2.5 2.5 L8.5 8.5 M8.5 2.5 L2.5 8.5" stroke="#e8e8e8" stroke-width="0.9"/></svg>
<div class="t" style="left:1258px;top:888.0px;font-size:11px;line-height:14px;color:#f0f0f0;">Dab Preview</div>
<div class="a" style="left:1237px;top:910px;width:210px;height:80px;background:#3a3a3a"></div>
<div class="a" style="left:1238px;top:910px;width:209px;height:18px;background:#1c1c1c"></div>
<div class="a" style="left:1240px;top:912px;width:96px;height:16px;background:#3a3a3a;border-top:1px solid #474747;border-left:1px solid #444;border-right:1px solid #2e2e2e"></div>
<svg class="a" style="left:1244px;top:915px" width="11" height="11" viewBox="0 0 11 11"><rect x="0.5" y="0.5" width="10" height="10" fill="none" stroke="#e8e8e8" stroke-width="1"/><path d="M2.5 2.5 L8.5 8.5 M8.5 2.5 L2.5 8.5" stroke="#e8e8e8" stroke-width="0.9"/></svg>
<div class="t" style="left:1258px;top:914.0px;font-size:11px;line-height:14px;color:#f0f0f0;">Stroke Preview</div>
<div class="a" style="left:1240px;top:935px;width:204px;height:46px;background:#e2e2e2;border:1px solid #8a8a8a"></div>
<svg class="a" style="left:1240px;top:935px" width="204" height="46" viewBox="0 0 204 46"><path d="M22.5 28.8 C40 18 60 3.5 86 3.5 C110 3.5 125 15 143.6 19.6 C160 23 172 23 182.8 23 C172 30 155 39.8 134.4 39.8 C115 39.8 100 33.4 80 30 C65 28.5 45 28.5 22.5 28.8 Z" fill="#1e1e1e"/></svg>
<div class="a" style="left:1451px;top:60px;width:214px;height:680px;background:#2e2e2e"></div>
<div class="a" style="left:1451px;top:60px;width:214px;height:12px;background:linear-gradient(#3e3e3e,#262626)"></div>
<div class="a" style="left:1454px;top:62.5px;width:7px;height:7px;border-radius:50%;background:#e6e6e6"></div>
<svg class="a" style="left:1648px;top:63.0px" width="13" height="7" viewBox="0 0 13 7"><rect y="0" width="13" height="2.5" fill="#eee"/><rect y="4" width="13" height="2.5" fill="#eee"/></svg>
<div class="a" style="left:1453px;top:74px;width:210px;height:291px;background:#3a3a3a"></div>
<div class="a" style="left:1453px;top:74px;width:210px;height:18px;background:#1c1c1c"></div>
<div class="a" style="left:1457px;top:76px;width:51px;height:16px;background:#3a3a3a;border-top:1px solid #474747;border-left:1px solid #444;border-right:1px solid #2e2e2e"></div>
<svg class="a" style="left:1461px;top:79px" width="11" height="11" viewBox="0 0 11 11"><rect x="0.5" y="0.5" width="10" height="10" fill="none" stroke="#e8e8e8" stroke-width="1"/><path d="M2.5 2.5 L8.5 8.5 M8.5 2.5 L2.5 8.5" stroke="#e8e8e8" stroke-width="0.9"/></svg>
<div class="t" style="left:1475px;top:78.0px;font-size:11px;line-height:14px;color:#f0f0f0;">Mixer</div>
<svg class="a" style="left:1648px;top:79px" width="13" height="10" viewBox="0 0 13 10"><rect y="0" width="13" height="2" fill="#eee"/><rect y="4" width="13" height="2" fill="#eee"/><rect y="8" width="13" height="2" fill="#eee"/></svg>
<div class="a" style="left:1458.0px;top:101px;width:17px;height:17px;background:#e31e24;border:1px solid #aaa;border-radius:3px"></div>
<div class="a" style="left:1478.4px;top:101px;width:17px;height:17px;background:#f0a11a;border:1px solid #aaa;border-radius:3px"></div>
<div class="a" style="left:1498.8px;top:101px;width:17px;height:17px;background:#fef200;border:1px solid #aaa;border-radius:3px"></div>
<div class="a" style="left:1519.2px;top:101px;width:17px;height:17px;background:#8cc63e;border:1px solid #aaa;border-radius:3px"></div>
<div class="a" style="left:1539.6px;top:101px;width:17px;height:17px;background:#0e9a48;border:1px solid #aaa;border-radius:3px"></div>
<div class="a" style="left:1560.0px;top:101px;width:17px;height:17px;background:#344d9d;border:1px solid #aaa;border-radius:3px"></div>
<div class="a" style="left:1580.4px;top:101px;width:17px;height:17px;background:#3c1362;border:1px solid #aaa;border-radius:3px"></div>
<div class="a" style="left:1600.8px;top:101px;width:17px;height:17px;background:#000000;border:1px solid #aaa;border-radius:3px"></div>
<div class="a" style="left:1621.2px;top:101px;width:17px;height:17px;background:#d9d9d9;border:1px solid #aaa;border-radius:3px"></div>
<div class="a" style="left:1641.6px;top:101px;width:17px;height:17px;background:#ffffff;border:1px solid #aaa;border-radius:3px"></div>
<div class="a" style="left:1456px;top:123px;width:204px;height:187px;background:#c8b39b"></div>
<svg class="a" style="left:1456px;top:123px" width="204" height="187" viewBox="1456 123 204 187"><ellipse cx="1484.7" cy="153" rx="18" ry="18" fill="#f2ccc5"/><ellipse cx="1542" cy="153" rx="18" ry="17" fill="#f9ab80"/><ellipse cx="1608.7" cy="160.7" rx="20" ry="18" fill="#c6c29d"/><ellipse cx="1639.7" cy="136" rx="10" ry="10" fill="#6e1b69"/><ellipse cx="1568.7" cy="177.8" rx="15" ry="15" fill="#fde597"/><ellipse cx="1505.8" cy="185.5" rx="14" ry="14" fill="#b25c68"/><ellipse cx="1484" cy="210" rx="19" ry="23" fill="#e59294"/><ellipse cx="1539" cy="207" rx="21" ry="20" fill="#fdc285"/><ellipse cx="1606.5" cy="212" rx="19" ry="19" fill="#a7a176"/><ellipse cx="1639.7" cy="194.8" rx="5" ry="10" fill="#7896b6"/><ellipse cx="1629.7" cy="232" rx="15" ry="15" fill="#6d6a46"/><ellipse cx="1567.8" cy="235" rx="22" ry="15" fill="#f28448"/><ellipse cx="1472.3" cy="247.5" rx="9" ry="11" fill="#fce3c9"/><ellipse cx="1508.9" cy="261.4" rx="16" ry="16" fill="#d86526"/><ellipse cx="1539.9" cy="270.7" rx="19" ry="18" fill="#b06a42"/><ellipse cx="1552" cy="261.4" rx="6" ry="9" fill="#d86526"/><ellipse cx="1603.4" cy="269" rx="14" ry="14" fill="#b06a42"/><ellipse cx="1476.3" cy="289.3" rx="15" ry="15" fill="#4b2713"/><ellipse cx="1516.6" cy="294" rx="11" ry="11" fill="#fdc285"/></svg>
<svg class="a" style="left:1456px;top:312px" width="210" height="20" viewBox="1456 312 210 20">
<g fill="#f0a32a"><path d="M1474 314 L1465 324 L1467 326 Z"/><path d="M1464 325 C1461 325 1461 328 1459 329 C1463 330 1466 328 1466 327 Z"/><path d="M1460 318 L1464 320" stroke="#f0a32a"/></g>
<g fill="#e6e6e6"><path d="M1497 314 L1488 324 L1490 326 Z"/><path d="M1487 325 C1484 325 1484 328 1482 329 C1486 330 1489 328 1489 327 Z"/></g>
<g fill="none" stroke="#e6e6e6" stroke-width="1.3"><path d="M1517 314 L1510 322"/><path d="M1509 322 C1506 324 1505 328 1504 330 C1507 329 1511 327 1512 325 Z" fill="#8899cc"/></g>
<g stroke="#f0a32a" fill="#f0a32a"><path d="M1527 329 L1535 321" stroke-width="2"/><path d="M1533 318 L1539 324" stroke-width="2"/><path d="M1537 316 C1540 313 1543 316 1540 319 Z"/></g>
<g stroke="#e6e6e6" fill="none" stroke-width="1.3"><path d="M1548 329 L1556 321"/><path d="M1554 318 L1560 324" stroke-width="2"/><circle cx="1550" cy="327" r="2.5"/></g>
<g stroke="#e6e6e6" fill="none" stroke-width="1.5"><circle cx="1581" cy="320" r="5"/><path d="M1577 324 L1572 329" stroke-width="2.5"/></g>
<g stroke="#e6e6e6" fill="none" stroke-width="1.1"><path d="M1594 330 C1591 325 1592 319 1596 317 L1601 314 C1603 313 1604 315 1602 317 L1604 315 C1606 314 1607 316 1605 318 C1606 324 1604 329 1599 330 Z"/></g>
<g fill="#e6e6e6"><rect x="1643" y="315" width="12" height="2"/><rect x="1646" y="313" width="6" height="2"/><path d="M1644 318 H1654 L1653 330 H1645 Z"/></g>
<g stroke="#3a3a3a" stroke-width="1"><path d="M1647 320 V328 M1649 320 V328 M1651 320 V328"/></g>
</svg>
<svg class="a" style="left:1457px;top:333px" width="14" height="14" viewBox="0 0 14 14"><circle cx="7" cy="7" r="6" fill="none" stroke="#ccc" stroke-width="1"/><circle cx="7" cy="7" r="3.5" fill="#eee"/></svg>
<div class="a" style="left:1474px;top:334px;width:68px;height:12px;background:linear-gradient(90deg,#5f5f5f 70%,#a0a0a0)"></div>
<div class="a" style="left:1474px;top:346px;width:142px;height:2px;background:#474747"></div>
<div class="a" style="left:1620px;top:333px;width:40px;height:14px;background:#232323;border:1px solid #4e4e4e;color:#f0f0f0;font-size:10px;line-height:12px;text-align:right;padding-right:3px;white-space:nowrap">24</div>
<div class="a" style="left:1548px;top:351px;width:4px;height:4px;border-radius:50%;background:#ccc"></div>
<div class="a" style="left:1556px;top:351px;width:4px;height:4px;border-radius:50%;background:#ccc"></div>
<div class="a" style="left:1564px;top:351px;width:4px;height:4px;border-radius:50%;background:#ccc"></div>
<div class="a" style="left:1451px;top:363px;width:214px;height:11px;background:linear-gradient(#3e3e3e,#262626)"></div>
<div class="a" style="left:1454px;top:365.5px;width:7px;height:7px;border-radius:50%;background:#e6e6e6"></div>
<svg class="a" style="left:1648px;top:365.5px" width="13" height="7" viewBox="0 0 13 7"><rect y="0" width="13" height="2.5" fill="#eee"/><rect y="4" width="13" height="2.5" fill="#eee"/></svg>
<div class="a" style="left:1453px;top:376px;width:210px;height:83px;background:#3a3a3a"></div>
<div class="a" style="left:1453px;top:377px;width:210px;height:18px;background:#1c1c1c"></div>
<div class="a" style="left:1457px;top:379px;width:94px;height:16px;background:#3a3a3a;border-top:1px solid #474747;border-left:1px solid #444;border-right:1px solid #2e2e2e"></div>
<svg class="a" style="left:1461px;top:382px" width="11" height="11" viewBox="0 0 11 11"><rect x="0.5" y="0.5" width="10" height="10" fill="none" stroke="#e8e8e8" stroke-width="1"/><path d="M2.5 2.5 L8.5 8.5 M8.5 2.5 L2.5 8.5" stroke="#e8e8e8" stroke-width="0.9"/></svg>
<div class="t" style="left:1475px;top:381.0px;font-size:11px;line-height:14px;color:#f0f0f0;">Stroke Preview</div>
<div class="a" style="left:1456px;top:403px;width:204px;height:46px;background:#e2e2e2;border:1px solid #8a8a8a"></div>
<svg class="a" style="left:1456px;top:403px" width="204" height="46" viewBox="0 0 204 46"><path d="M22.5 28.8 C40 18 60 3.5 86 3.5 C110 3.5 125 15 143.6 19.6 C160 23 172 23 182.8 23 C172 30 155 39.8 134.4 39.8 C115 39.8 100 33.4 80 30 C65 28.5 45 28.5 22.5 28.8 Z" fill="#1e1e1e"/></svg>
<div class="a" style="left:1451px;top:461px;width:214px;height:24px;background:linear-gradient(#444,#2a2a2a)"></div>
<div class="a" style="left:1454px;top:470.5px;width:7px;height:7px;border-radius:50%;background:#e6e6e6"></div>
<div class="t" style="left:1475px;top:466.5px;font-size:11.7px;line-height:14px;color:#f0f0f0;">General Brush Controls</div>
<svg class="a" style="left:1648px;top:471px" width="13" height="7" viewBox="0 0 13 7"><rect y="0" width="13" height="2.5" fill="#eee"/><rect y="4" width="13" height="2.5" fill="#eee"/></svg>
<div class="a" style="left:1453px;top:486px;width:210px;height:254px;background:#3a3a3a"></div>
<div class="a" style="left:1453px;top:487px;width:210px;height:18px;background:#1c1c1c"></div>
<div class="a" style="left:1457px;top:489px;width:61px;height:16px;background:#3a3a3a;border-top:1px solid #474747;border-left:1px solid #444;border-right:1px solid #2e2e2e"></div>
<svg class="a" style="left:1461px;top:492px" width="11" height="11" viewBox="0 0 11 11"><rect x="0.5" y="0.5" width="10" height="10" fill="none" stroke="#e8e8e8" stroke-width="1"/><path d="M2.5 2.5 L8.5 8.5 M8.5 2.5 L2.5 8.5" stroke="#e8e8e8" stroke-width="0.9"/></svg>
<div class="t" style="left:1475px;top:491.0px;font-size:11px;line-height:14px;color:#f0f0f0;">General</div>
<div class="t" style="left:1226px;width:300px;text-align:right;top:517.5px;font-size:10px;line-height:14px;color:#e2e2e2">Dab Type:</div>
<div class="a" style="left:1530px;top:514px;width:129px;height:18px;background:#5c5c5c"></div>
<div class="t" style="left:1536px;top:517.5px;font-size:10px;line-height:14px;color:#f0f0f0;">Rendered</div>
<svg class="a" style="left:1645px;top:520.0px" width="8" height="6" viewBox="0 0 8 6"><path d="M1 1 L4 4 L7 1" stroke="#e8e8e8" stroke-width="1.3" fill="none"/></svg>
<div class="t" style="left:1226px;width:300px;text-align:right;top:539.5px;font-size:10px;line-height:14px;color:#e2e2e2">Stroke Type:</div>
<div class="a" style="left:1530px;top:536px;width:129px;height:18px;background:#5c5c5c"></div>
<div class="t" style="left:1536px;top:539.5px;font-size:10px;line-height:14px;color:#f0f0f0;">Single</div>
<svg class="a" style="left:1645px;top:542.0px" width="8" height="6" viewBox="0 0 8 6"><path d="M1 1 L4 4 L7 1" stroke="#e8e8e8" stroke-width="1.3" fill="none"/></svg>
<div class="t" style="left:1226px;width:300px;text-align:right;top:561.5px;font-size:10px;line-height:14px;color:#7c7c7c">Method:</div>
<div class="a" style="left:1530px;top:558px;width:129px;height:18px;background:#262626;border:1px solid #0a0a0a"></div>
<div class="t" style="left:1536px;top:561.5px;font-size:10px;line-height:14px;color:#777;">Cover</div>
<svg class="a" style="left:1645px;top:564.0px" width="8" height="6" viewBox="0 0 8 6"><path d="M1 1 L4 4 L7 1" stroke="#555" stroke-width="1.3" fill="none"/></svg>
<div class="t" style="left:1226px;width:300px;text-align:right;top:583.5px;font-size:10px;line-height:14px;color:#7c7c7c">Subcategory:</div>
<div class="a" style="left:1530px;top:580px;width:129px;height:18px;background:#262626;border:1px solid #0a0a0a"></div>
<div class="t" style="left:1536px;top:583.5px;font-size:10px;line-height:14px;color:#777;">Soft Cover</div>
<svg class="a" style="left:1645px;top:586.0px" width="8" height="6" viewBox="0 0 8 6"><path d="M1 1 L4 4 L7 1" stroke="#555" stroke-width="1.3" fill="none"/></svg>
<div class="t" style="left:1226px;width:300px;text-align:right;top:605.5px;font-size:10px;line-height:14px;color:#e2e2e2">Source:</div>
<div class="a" style="left:1530px;top:602px;width:129px;height:18px;background:#5c5c5c"></div>
<div class="t" style="left:1536px;top:605.5px;font-size:10px;line-height:14px;color:#f0f0f0;">Color</div>
<svg class="a" style="left:1645px;top:608.0px" width="8" height="6" viewBox="0 0 8 6"><path d="M1 1 L4 4 L7 1" stroke="#e8e8e8" stroke-width="1.3" fill="none"/></svg>
<div class="a" style="left:1456px;top:625px;width:204px;height:1px;background:#4a4a4a"></div>
<div class="a" style="left:1456px;top:632px;width:13px;height:13px;background:linear-gradient(#8a8a8a,#5a5a5a);border:1px solid #2a2a2a"></div>
<div class="t" style="left:1475px;top:632.5px;font-size:10px;line-height:14px;color:#e8e8e8;">Multicore</div>
<div class="a" style="left:1453px;top:654px;width:210px;height:18px;background:#1c1c1c"></div>
<div class="a" style="left:1457px;top:656px;width:41px;height:16px;background:#060606;border:1px solid #2a2a2a;border-bottom:none"></div>
<div class="t" style="left:1463px;top:658.0px;font-size:11px;line-height:14px;color:#e0e0e0;width:33px;overflow:hidden">Spacin</div>
<div class="a" style="left:1501px;top:656px;width:78px;height:16px;background:#3a3a3a;border-top:1px solid #474747;border-left:1px solid #444;border-right:1px solid #2e2e2e"></div>
<svg class="a" style="left:1505px;top:659px" width="11" height="11" viewBox="0 0 11 11"><rect x="0.5" y="0.5" width="10" height="10" fill="none" stroke="#e8e8e8" stroke-width="1"/><path d="M2.5 2.5 L8.5 8.5 M8.5 2.5 L2.5 8.5" stroke="#e8e8e8" stroke-width="0.9"/></svg>
<div class="t" style="left:1519px;top:658.0px;font-size:11px;line-height:14px;color:#f0f0f0;">Stroke Jitter</div>
<div class="a" style="left:1582px;top:656px;width:52px;height:16px;background:#060606;border:1px solid #2a2a2a;border-bottom:none"></div>
<div class="t" style="left:1588px;top:658.0px;font-size:11px;line-height:14px;color:#e0e0e0;width:44px;overflow:hidden">Smoothir</div>
<div class="a" style="left:1456px;top:693px;width:160px;height:2px;background:#474747"></div>
<div class="t" style="left:1458px;top:681.5px;font-size:10px;line-height:14px;color:#7c7c7c;">Stroke Jitter:</div>
<div class="a" style="left:1620px;top:680px;width:40px;height:14px;background:#323232;border:1px solid #4e4e4e;color:#8a8a8a;font-size:10px;line-height:12px;text-align:right;padding-right:3px;white-space:nowrap">0.00</div>
<div class="t" style="left:1225px;width:300px;text-align:right;top:700.5px;font-size:10px;line-height:14px;color:#7c7c7c">Expression:</div>
<div class="a" style="left:1530px;top:697px;width:86px;height:19px;background:#262626;border:1px solid #0a0a0a"></div>
<div class="t" style="left:1536px;top:701.0px;font-size:10px;line-height:14px;color:#777;">None</div>
<svg class="a" style="left:1602px;top:703.5px" width="8" height="6" viewBox="0 0 8 6"><path d="M1 1 L4 4 L7 1" stroke="#555" stroke-width="1.3" fill="none"/></svg>
<svg class="a" style="left:1621px;top:699px" width="15" height="15" viewBox="0 0 15 15"><path d="M1 1 H14 V14 H1 Z" fill="none" stroke="#777" stroke-width="0"/><path d="M1 1 L8 1 L1 8 Z M14 14 L7 14 L14 7 Z" fill="#777"/><path d="M3 12 L12 3" stroke="#777" stroke-width="2"/><path d="M1 14 L1 9 M14 1 L14 6" stroke="#777" stroke-width="1"/></svg>
<svg class="a" style="left:1646px;top:699px" width="15" height="15" viewBox="0 0 15 15"><path d="M6 4 L10 1 V14 L6 11 Z" fill="#777"/><path d="M10 3 C14 5 14 10 10 12" fill="#777"/><path d="M4 3 C1 6 1 9 4 12 M2.5 4.5 C0.5 6.5 0.5 8.5 2.5 10.5" stroke="#777" stroke-width="1" fill="none"/></svg>
<div class="a" style="left:1456px;top:731px;width:160px;height:2px;background:#474747"></div>
<div class="t" style="left:1458px;top:719.5px;font-size:10px;line-height:14px;color:#7c7c7c;">Direction:</div>
<div class="a" style="left:1620px;top:718px;width:40px;height:14px;background:#323232;border:1px solid #4e4e4e;color:#8a8a8a;font-size:10px;line-height:12px;text-align:right;padding-right:3px;white-space:nowrap">0°</div>
<div class="a" style="left:1665px;top:60px;width:213px;height:755px;background:#2e2e2e"></div>
<div class="a" style="left:1665px;top:60px;width:213px;height:23px;background:linear-gradient(#444,#2a2a2a)"></div>
<div class="a" style="left:1668px;top:69px;width:7px;height:7px;border-radius:50%;background:#e6e6e6"></div>
<div class="t" style="left:1689px;top:65.5px;font-size:11.6px;line-height:14px;color:#f0f0f0;">Color and Layers</div>
<svg class="a" style="left:1863px;top:69px" width="13" height="7" viewBox="0 0 13 7"><rect y="0" width="13" height="2.5" fill="#eee"/><rect y="4" width="13" height="2.5" fill="#eee"/></svg>
<div class="a" style="left:1667px;top:85px;width:209px;height:288px;background:#3a3a3a"></div>
<div class="a" style="left:1667px;top:87px;width:209px;height:18px;background:#1c1c1c"></div>
<div class="a" style="left:1671px;top:89px;width:49px;height:16px;background:#3a3a3a;border-top:1px solid #474747;border-left:1px solid #444;border-right:1px solid #2e2e2e"></div>
<svg class="a" style="left:1675px;top:92px" width="11" height="11" viewBox="0 0 11 11"><rect x="0.5" y="0.5" width="10" height="10" fill="none" stroke="#e8e8e8" stroke-width="1"/><path d="M2.5 2.5 L8.5 8.5 M8.5 2.5 L2.5 8.5" stroke="#e8e8e8" stroke-width="0.9"/></svg>
<div class="t" style="left:1689px;top:91.0px;font-size:11px;line-height:14px;color:#f0f0f0;">Color</div>
<div class="a" style="left:1722px;top:89px;width:101px;height:16px;background:#060606;border:1px solid #2a2a2a;border-bottom:none"></div>
<div class="t" style="left:1728px;top:91.0px;font-size:11px;line-height:14px;color:#e0e0e0;width:93px;overflow:hidden">Color Set Libraries</div>
<svg class="a" style="left:1863px;top:92px" width="13" height="10" viewBox="0 0 13 10"><rect y="0" width="13" height="2" fill="#eee"/><rect y="4" width="13" height="2" fill="#eee"/><rect y="8" width="13" height="2" fill="#eee"/></svg>
<div class="a" style="left:1680px;top:116px;width:184px;height:184px;border-radius:50%;background:conic-gradient(from 0deg,#ffee00 0deg,#b0ff00 30deg,#00ff00 62deg,#00ff90 95deg,#00ffff 122deg,#0080ff 155deg,#0000ff 180deg,#8000ff 212deg,#ff00ff 242deg,#ff0080 272deg,#ff0000 298deg,#ff6a00 325deg,#ffb000 345deg,#ffee00 360deg);-webkit-mask:radial-gradient(circle,transparent 77px,#000 78px);mask:radial-gradient(circle,transparent 77px,#000 78px)"></div>
<svg class="a" style="left:1730px;top:140px;isolation:isolate" width="120" height="136" viewBox="1730 140 120 136">
<defs><linearGradient id="tgw" x1="1734" y1="143" x2="1790.7" y2="239.8" gradientUnits="userSpaceOnUse"><stop offset="0" stop-color="#fff"/><stop offset="1" stop-color="#000"/></linearGradient>
<linearGradient id="tgy" x1="1845" y1="208" x2="1734" y2="208" gradientUnits="userSpaceOnUse"><stop offset="0" stop-color="#f6c200"/><stop offset="1" stop-color="#000"/></linearGradient></defs>
<path d="M1734 143 L1734 273 L1845 208 Z" fill="#000"/>
<path d="M1734 143 L1734 273 L1845 208 Z" fill="url(#tgw)" style="mix-blend-mode:plus-lighter"/>
<path d="M1734 143 L1734 273 L1845 208 Z" fill="url(#tgy)" style="mix-blend-mode:plus-lighter"/>
</svg>
<svg class="a" style="left:1745px;top:188px" width="22" height="22" viewBox="1745 188 22 22"><circle cx="1756" cy="199.5" r="5.5" fill="#aba27b" stroke="#111" stroke-width="1"/><circle cx="1756" cy="199.5" r="6.5" fill="none" stroke="#ddd" stroke-width="0.8"/></svg>
<svg class="a" style="left:1745px;top:114px" width="22" height="22" viewBox="0 0 22 22"><circle cx="11" cy="10" r="7.5" fill="#f5b400" stroke="#111" stroke-width="1.3"/><circle cx="11" cy="10" r="8.6" fill="none" stroke="#ddd" stroke-width="0.8"/></svg>
<svg class="a" style="left:1668px;top:258px" width="50" height="48" viewBox="0 0 50 48"><circle cx="16" cy="16" r="13" fill="#1b3532" stroke="#666" stroke-width="1"/><circle cx="29" cy="29" r="14.5" fill="#aba27b" stroke="#f0f0f0" stroke-width="1.3"/><path d="M5 30 V38 H12 M3 32 L5 30 L7 32 M10 36 L12 38 L10 40" stroke="#e6e6e6" stroke-width="1.2" fill="none"/></svg>
<div class="a" style="left:1845px;top:274px;width:11px;height:11px;border-radius:50%;background:conic-gradient(#f33,#fd3,#3d3,#3dd,#33f,#d3d,#f33)"></div>
<svg class="a" style="left:1842px;top:274px" width="26" height="26" viewBox="0 0 26 26"><path d="M15 4 C18 4 19 7 18 10 L17 13 H22 V17 H10 V13 H15 L14 10 C13 7 13 4 15 4Z" fill="#eee"/><rect x="9" y="19" width="14" height="2" fill="#eee"/></svg>
<div class="a" style="left:1668px;top:313px;width:107px;height:12px;background:linear-gradient(90deg,#5f5f5f 70%,#a0a0a0)"></div>
<div class="a" style="left:1668px;top:325px;width:162px;height:2px;background:#474747"></div>
<div class="t" style="left:1671px;top:313.5px;font-size:10px;line-height:14px;color:#e8e8e8;">R</div>
<div class="a" style="left:1834px;top:312px;width:40px;height:14px;background:#232323;border:1px solid #4e4e4e;color:#f0f0f0;font-size:10px;line-height:12px;text-align:right;padding-right:3px;white-space:nowrap">168</div>
<div class="a" style="left:1668px;top:329px;width:101px;height:12px;background:linear-gradient(90deg,#5f5f5f 70%,#a0a0a0)"></div>
<div class="a" style="left:1668px;top:341px;width:162px;height:2px;background:#474747"></div>
<div class="t" style="left:1671px;top:329.5px;font-size:10px;line-height:14px;color:#e8e8e8;">G</div>
<div class="a" style="left:1834px;top:328px;width:40px;height:14px;background:#232323;border:1px solid #4e4e4e;color:#f0f0f0;font-size:10px;line-height:12px;text-align:right;padding-right:3px;white-space:nowrap">159</div>
<div class="a" style="left:1668px;top:345px;width:74px;height:12px;background:linear-gradient(90deg,#5f5f5f 70%,#a0a0a0)"></div>
<div class="a" style="left:1668px;top:357px;width:162px;height:2px;background:#474747"></div>
<div class="t" style="left:1671px;top:345.5px;font-size:10px;line-height:14px;color:#e8e8e8;">B</div>
<div class="a" style="left:1834px;top:344px;width:40px;height:14px;background:#232323;border:1px solid #4e4e4e;color:#f0f0f0;font-size:10px;line-height:12px;text-align:right;padding-right:3px;white-space:nowrap">116</div>
<div class="a" style="left:1764px;top:363px;width:4px;height:4px;border-radius:50%;background:#ccc"></div>
<div class="a" style="left:1772px;top:363px;width:4px;height:4px;border-radius:50%;background:#ccc"></div>
<div class="a" style="left:1780px;top:363px;width:4px;height:4px;border-radius:50%;background:#ccc"></div>
<div class="a" style="left:1667px;top:374px;width:209px;height:17px;background:#1c1c1c"></div>
<div class="a" style="left:1671px;top:376px;width:98px;height:15px;background:#3a3a3a;border-top:1px solid #474747;border-left:1px solid #444;border-right:1px solid #2e2e2e"></div>
<svg class="a" style="left:1675px;top:379px" width="11" height="11" viewBox="0 0 11 11"><rect x="0.5" y="0.5" width="10" height="10" fill="none" stroke="#e8e8e8" stroke-width="1"/><path d="M2.5 2.5 L8.5 8.5 M8.5 2.5 L2.5 8.5" stroke="#e8e8e8" stroke-width="0.9"/></svg>
<div class="t" style="left:1689px;top:378.0px;font-size:11px;line-height:14px;color:#f0f0f0;">Color Variability</div>
<div class="a" style="left:1772px;top:376px;width:76px;height:15px;background:#060606;border:1px solid #2a2a2a;border-bottom:none"></div>
<div class="t" style="left:1778px;top:378.0px;font-size:11px;line-height:14px;color:#e0e0e0;width:68px;overflow:hidden">Color Expressi</div>
<div class="a" style="left:1667px;top:391px;width:209px;height:4px;background:#3a3a3a"></div>
<div class="a" style="left:1667px;top:397px;width:209px;height:418px;background:#3a3a3a"></div>
<div class="a" style="left:1667px;top:398px;width:209px;height:18px;background:#1c1c1c"></div>
<div class="a" style="left:1672px;top:400px;width:53px;height:16px;background:#3a3a3a;border-top:1px solid #474747;border-left:1px solid #444;border-right:1px solid #2e2e2e"></div>
<svg class="a" style="left:1676px;top:403px" width="11" height="11" viewBox="0 0 11 11"><rect x="0.5" y="0.5" width="10" height="10" fill="none" stroke="#e8e8e8" stroke-width="1"/><path d="M2.5 2.5 L8.5 8.5 M8.5 2.5 L2.5 8.5" stroke="#e8e8e8" stroke-width="0.9"/></svg>
<div class="t" style="left:1690px;top:402.0px;font-size:11px;line-height:14px;color:#f0f0f0;">Layers</div>
<div class="a" style="left:1727px;top:400px;width:57px;height:16px;background:#060606;border:1px solid #2a2a2a;border-bottom:none"></div>
<div class="t" style="left:1733px;top:402.0px;font-size:11px;line-height:14px;color:#e0e0e0;width:49px;overflow:hidden">Channels</div>
<svg class="a" style="left:1863px;top:403px" width="13" height="10" viewBox="0 0 13 10"><rect y="0" width="13" height="2" fill="#eee"/><rect y="4" width="13" height="2" fill="#eee"/><rect y="8" width="13" height="2" fill="#eee"/></svg>
<div class="a" style="left:1671px;top:424px;width:100px;height:18px;background:#5c5c5c"></div>
<div class="t" style="left:1677px;top:427.5px;font-size:10px;line-height:14px;color:#f0f0f0;">Default</div>
<svg class="a" style="left:1757px;top:430.0px" width="8" height="6" viewBox="0 0 8 6"><path d="M1 1 L4 4 L7 1" stroke="#e8e8e8" stroke-width="1.3" fill="none"/></svg>
<div class="a" style="left:1773px;top:424px;width:100px;height:18px;background:#5c5c5c"></div>
<div class="t" style="left:1779px;top:427.5px;font-size:10px;line-height:14px;color:#f0f0f0;">Ignore</div>
<svg class="a" style="left:1859px;top:430.0px" width="8" height="6" viewBox="0 0 8 6"><path d="M1 1 L4 4 L7 1" stroke="#e8e8e8" stroke-width="1.3" fill="none"/></svg>
<svg class="a" style="left:1670px;top:446px" width="50" height="15" viewBox="0 0 50 15"><defs><pattern id="chk" width="3" height="3" patternUnits="userSpaceOnUse"><rect width="1.5" height="1.5" fill="#ddd"/><rect x="1.5" y="1.5" width="1.5" height="1.5" fill="#ddd"/></pattern></defs><rect x="0" y="0" width="14" height="14" fill="url(#chk)"/><rect x="1" y="2" width="5" height="4" fill="#eee"/><path d="M2 2 V0.5 H5 V2" stroke="#eee" fill="none"/><g fill="none" stroke="#ddd" stroke-width="1"><rect x="16.5" y="1.5" width="8" height="8"/><rect x="20.5" y="5.5" width="8" height="8" fill="#666"/><rect x="32.5" y="1.5" width="8" height="8"/><rect x="36.5" y="5.5" width="8" height="8" fill="#666"/></g><path d="M19 4 L26 11" stroke="#ddd" stroke-width="1.5"/></svg>
<div class="a" style="left:1720px;top:447px;width:110px;height:12px;background:linear-gradient(90deg,#5f5f5f 70%,#a0a0a0)"></div>
<div class="a" style="left:1834px;top:446px;width:40px;height:14px;background:#232323;border:1px solid #4e4e4e;color:#f0f0f0;font-size:10px;line-height:12px;text-align:right;padding-right:3px;white-space:nowrap">100%</div>
<div class="a" style="left:1671px;top:467px;width:203px;height:316px;background:#2a2a2a;border:1px solid #1a1a1a"></div>
<div class="a" style="left:1672px;top:469px;width:190px;height:33px;background:#2d2d2d"></div>
<div class="a" style="left:1672px;top:502px;width:190px;height:1px;background:#242424"></div>
<div class="a" style="left:1692px;top:469px;width:1px;height:34px;background:#262626"></div>
<svg class="a" style="left:1674px;top:481.0px" width="15" height="10" viewBox="0 0 15 10"><path d="M1 5 C4 0 11 0 14 5 C11 10 4 10 1 5Z" fill="#e8e8e8"/><circle cx="7.5" cy="5" r="2.3" fill="#2d2d2d"/></svg>
<div class="a" style="left:1694px;top:472px;width:32px;height:29px;background-color:#fff;background-image:linear-gradient(45deg,#d8d8d8 25%,transparent 25%,transparent 75%,#d8d8d8 75%),linear-gradient(45deg,#d8d8d8 25%,transparent 25%,transparent 75%,#d8d8d8 75%);background-size:8px 8px;background-position:0 0,4px 4px"></div>
<div class="t" style="left:1732px;top:479.0px;font-size:11.6px;line-height:14px;color:#f0f0f0;">Flowers</div>
<svg class="a" style="left:1844px;top:472px" width="16" height="13" viewBox="0 0 16 13"><path d="M1 7 L8 11 L15 7" stroke="#e8e8e8" fill="none" stroke-width="1.2"/><path d="M1 4.5 L8 1 L15 4.5 L8 8.5 Z" fill="#2d2d2d" stroke="#e8e8e8" stroke-width="1.2"/></svg>
<div class="a" style="left:1672px;top:503px;width:190px;height:34px;background:#2d2d2d"></div>
<div class="a" style="left:1672px;top:537px;width:190px;height:1px;background:#242424"></div>
<div class="a" style="left:1692px;top:503px;width:1px;height:35px;background:#262626"></div>
<svg class="a" style="left:1674px;top:515.5px" width="15" height="10" viewBox="0 0 15 10"><path d="M1 5 C4 0 11 0 14 5 C11 10 4 10 1 5Z" fill="#e8e8e8"/><circle cx="7.5" cy="5" r="2.3" fill="#2d2d2d"/></svg>
<div class="a" style="left:1694px;top:506px;width:32px;height:29px;background-color:#fff;background-image:linear-gradient(45deg,#d8d8d8 25%,transparent 25%,transparent 75%,#d8d8d8 75%),linear-gradient(45deg,#d8d8d8 25%,transparent 25%,transparent 75%,#d8d8d8 75%);background-size:8px 8px;background-position:0 0,4px 4px"></div>
<div class="t" style="left:1732px;top:513.5px;font-size:11.6px;line-height:14px;color:#f0f0f0;">Hot Spots</div>
<svg class="a" style="left:1844px;top:506px" width="16" height="13" viewBox="0 0 16 13"><path d="M1 7 L8 11 L15 7" stroke="#e8e8e8" fill="none" stroke-width="1.2"/><path d="M1 4.5 L8 1 L15 4.5 L8 8.5 Z" fill="#2d2d2d" stroke="#e8e8e8" stroke-width="1.2"/></svg>
<div class="a" style="left:1672px;top:538px;width:190px;height:34px;background:#2d2d2d"></div>
<div class="a" style="left:1672px;top:572px;width:190px;height:1px;background:#242424"></div>
<div class="a" style="left:1692px;top:538px;width:1px;height:35px;background:#262626"></div>
<svg class="a" style="left:1674px;top:550.5px" width="15" height="10" viewBox="0 0 15 10"><path d="M1 5 C4 0 11 0 14 5 C11 10 4 10 1 5Z" fill="#e8e8e8"/><circle cx="7.5" cy="5" r="2.3" fill="#2d2d2d"/></svg>
<div class="a" style="left:1694px;top:541px;width:32px;height:29px;background-color:#fff;background-image:linear-gradient(45deg,#d8d8d8 25%,transparent 25%,transparent 75%,#d8d8d8 75%),linear-gradient(45deg,#d8d8d8 25%,transparent 25%,transparent 75%,#d8d8d8 75%);background-size:8px 8px;background-position:0 0,4px 4px"></div>
<div class="t" style="left:1732px;top:548.5px;font-size:11.6px;line-height:14px;color:#f0f0f0;">light grass front</div>
<svg class="a" style="left:1844px;top:541px" width="16" height="13" viewBox="0 0 16 13"><path d="M1 7 L8 11 L15 7" stroke="#e8e8e8" fill="none" stroke-width="1.2"/><path d="M1 4.5 L8 1 L15 4.5 L8 8.5 Z" fill="#2d2d2d" stroke="#e8e8e8" stroke-width="1.2"/></svg>
<div class="a" style="left:1672px;top:573px;width:190px;height:20px;background:#2d2d2d"></div>
<div class="a" style="left:1672px;top:593px;width:190px;height:1px;background:#242424"></div>
<div class="a" style="left:1692px;top:573px;width:1px;height:21px;background:#262626"></div>
<svg class="a" style="left:1674px;top:578.5px" width="15" height="10" viewBox="0 0 15 10"><path d="M1 5 C4 0 11 0 14 5 C11 10 4 10 1 5Z" fill="#e8e8e8"/><circle cx="7.5" cy="5" r="2.3" fill="#2d2d2d"/></svg>
<div class="a" style="left:1693px;top:574px;width:3px;height:19px;background:#e8875a"></div>
<svg class="a" style="left:1704px;top:578.5px" width="7" height="10" viewBox="0 0 7 10"><path d="M1 0 L6 5 L1 10 Z" fill="#eee"/></svg>
<div class="t" style="left:1716px;top:576.5px;font-size:11.6px;line-height:14px;color:#f0f0f0;">Fox Lineart</div>
<div class="a" style="left:1672px;top:594px;width:190px;height:34px;background:#2d2d2d"></div>
<div class="a" style="left:1672px;top:628px;width:190px;height:1px;background:#242424"></div>
<div class="a" style="left:1692px;top:594px;width:1px;height:35px;background:#262626"></div>
<svg class="a" style="left:1674px;top:606.5px" width="15" height="10" viewBox="0 0 15 10"><path d="M1 5 C4 0 11 0 14 5 C11 10 4 10 1 5Z" fill="#e8e8e8"/><circle cx="7.5" cy="5" r="2.3" fill="#2d2d2d"/></svg>
<div class="a" style="left:1694px;top:597px;width:32px;height:29px;background-color:#fff;background-image:linear-gradient(45deg,#d8d8d8 25%,transparent 25%,transparent 75%,#d8d8d8 75%),linear-gradient(45deg,#d8d8d8 25%,transparent 25%,transparent 75%,#d8d8d8 75%);background-size:8px 8px;background-position:0 0,4px 4px"></div>
<div class="t" style="left:1732px;top:604.5px;font-size:11.6px;line-height:14px;color:#f0f0f0;">Fox Highlights</div>
<svg class="a" style="left:1844px;top:597px" width="16" height="13" viewBox="0 0 16 13"><path d="M1 7 L8 11 L15 7" stroke="#e8e8e8" fill="none" stroke-width="1.2"/><path d="M1 4.5 L8 1 L15 4.5 L8 8.5 Z" fill="#2d2d2d" stroke="#e8e8e8" stroke-width="1.2"/></svg>
<div class="a" style="left:1672px;top:629px;width:190px;height:34px;background:#2d2d2d"></div>
<div class="a" style="left:1672px;top:663px;width:190px;height:1px;background:#242424"></div>
<div class="a" style="left:1692px;top:629px;width:1px;height:35px;background:#262626"></div>
<svg class="a" style="left:1674px;top:641.5px" width="15" height="10" viewBox="0 0 15 10"><path d="M1 5 C4 0 11 0 14 5 C11 10 4 10 1 5Z" fill="#e8e8e8"/><circle cx="7.5" cy="5" r="2.3" fill="#2d2d2d"/></svg>
<div class="a" style="left:1694px;top:632px;width:32px;height:29px;background-color:#fff;background-image:linear-gradient(45deg,#d8d8d8 25%,transparent 25%,transparent 75%,#d8d8d8 75%),linear-gradient(45deg,#d8d8d8 25%,transparent 25%,transparent 75%,#d8d8d8 75%);background-size:8px 8px;background-position:0 0,4px 4px"></div>
<div class="t" style="left:1732px;top:639.5px;font-size:11.6px;line-height:14px;color:#f0f0f0;">Fox Shadow</div>
<svg class="a" style="left:1844px;top:632px" width="16" height="13" viewBox="0 0 16 13"><path d="M1 7 L8 11 L15 7" stroke="#e8e8e8" fill="none" stroke-width="1.2"/><path d="M1 4.5 L8 1 L15 4.5 L8 8.5 Z" fill="#2d2d2d" stroke="#e8e8e8" stroke-width="1.2"/></svg>
<div class="a" style="left:1672px;top:664px;width:190px;height:20px;background:#2d2d2d"></div>
<div class="a" style="left:1672px;top:684px;width:190px;height:1px;background:#242424"></div>
<div class="a" style="left:1692px;top:664px;width:1px;height:21px;background:#262626"></div>
<svg class="a" style="left:1674px;top:669.5px" width="15" height="10" viewBox="0 0 15 10"><path d="M1 5 C4 0 11 0 14 5 C11 10 4 10 1 5Z" fill="#e8e8e8"/><circle cx="7.5" cy="5" r="2.3" fill="#2d2d2d"/></svg>
<div class="a" style="left:1693px;top:665px;width:3px;height:19px;background:#e8875a"></div>
<svg class="a" style="left:1704px;top:669.5px" width="7" height="10" viewBox="0 0 7 10"><path d="M1 0 L6 5 L1 10 Z" fill="#eee"/></svg>
<div class="t" style="left:1716px;top:667.5px;font-size:11.6px;line-height:14px;color:#f0f0f0;">Fox Color Block</div>
<div class="a" style="left:1672px;top:685px;width:190px;height:34px;background:#2d2d2d"></div>
<div class="a" style="left:1672px;top:719px;width:190px;height:1px;background:#242424"></div>
<div class="a" style="left:1692px;top:685px;width:1px;height:35px;background:#262626"></div>
<svg class="a" style="left:1674px;top:697.5px" width="15" height="10" viewBox="0 0 15 10"><path d="M1 5 C4 0 11 0 14 5 C11 10 4 10 1 5Z" fill="#e8e8e8"/><circle cx="7.5" cy="5" r="2.3" fill="#2d2d2d"/></svg>
<div class="a" style="left:1694px;top:688px;width:32px;height:29px;background-color:#fff;background-image:linear-gradient(45deg,#d8d8d8 25%,transparent 25%,transparent 75%,#d8d8d8 75%),linear-gradient(45deg,#d8d8d8 25%,transparent 25%,transparent 75%,#d8d8d8 75%);background-size:8px 8px;background-position:0 0,4px 4px"></div>
<div class="t" style="left:1732px;top:695.5px;font-size:11.6px;line-height:14px;color:#f0f0f0;">Grass Color Shade</div>
<svg class="a" style="left:1844px;top:688px" width="16" height="13" viewBox="0 0 16 13"><path d="M1 7 L8 11 L15 7" stroke="#e8e8e8" fill="none" stroke-width="1.2"/><path d="M1 4.5 L8 1 L15 4.5 L8 8.5 Z" fill="#2d2d2d" stroke="#e8e8e8" stroke-width="1.2"/></svg>
<div class="a" style="left:1672px;top:720px;width:190px;height:34px;background:#2d2d2d"></div>
<div class="a" style="left:1672px;top:754px;width:190px;height:1px;background:#242424"></div>
<div class="a" style="left:1692px;top:720px;width:1px;height:35px;background:#262626"></div>
<svg class="a" style="left:1674px;top:732.5px" width="15" height="10" viewBox="0 0 15 10"><path d="M1 5 C4 0 11 0 14 5 C11 10 4 10 1 5Z" fill="#e8e8e8"/><circle cx="7.5" cy="5" r="2.3" fill="#2d2d2d"/></svg>
<div class="a" style="left:1694px;top:723px;width:32px;height:29px;background-color:#fff;background-image:linear-gradient(45deg,#d8d8d8 25%,transparent 25%,transparent 75%,#d8d8d8 75%),linear-gradient(45deg,#d8d8d8 25%,transparent 25%,transparent 75%,#d8d8d8 75%);background-size:8px 8px;background-position:0 0,4px 4px"></div>
<div class="t" style="left:1732px;top:730.5px;font-size:11.6px;line-height:14px;color:#f0f0f0;">Grass Color Block</div>
<svg class="a" style="left:1844px;top:723px" width="16" height="13" viewBox="0 0 16 13"><path d="M1 7 L8 11 L15 7" stroke="#e8e8e8" fill="none" stroke-width="1.2"/><path d="M1 4.5 L8 1 L15 4.5 L8 8.5 Z" fill="#2d2d2d" stroke="#e8e8e8" stroke-width="1.2"/></svg>
<div class="a" style="left:1672px;top:755px;width:190px;height:27px;background:#2d2d2d"></div>
<div class="a" style="left:1672px;top:782px;width:190px;height:1px;background:#242424"></div>
<div class="a" style="left:1692px;top:755px;width:1px;height:28px;background:#262626"></div>
<svg class="a" style="left:1674px;top:764.0px" width="15" height="10" viewBox="0 0 15 10"><path d="M1 5 C4 0 11 0 14 5 C11 10 4 10 1 5Z" fill="#e8e8e8"/><circle cx="7.5" cy="5" r="2.3" fill="#2d2d2d"/></svg>
<div class="a" style="left:1694px;top:758px;width:32px;height:24px;background-color:#fff;background-image:linear-gradient(45deg,#d8d8d8 25%,transparent 25%,transparent 75%,#d8d8d8 75%),linear-gradient(45deg,#d8d8d8 25%,transparent 25%,transparent 75%,#d8d8d8 75%);background-size:8px 8px;background-position:0 0,4px 4px"></div>
<div class="t" style="left:1732px;top:762.0px;font-size:11.6px;line-height:14px;color:#f0f0f0;">Mushroom Dots</div>
<svg class="a" style="left:1844px;top:758px" width="16" height="13" viewBox="0 0 16 13"><path d="M1 7 L8 11 L15 7" stroke="#e8e8e8" fill="none" stroke-width="1.2"/><path d="M1 4.5 L8 1 L15 4.5 L8 8.5 Z" fill="#2d2d2d" stroke="#e8e8e8" stroke-width="1.2"/></svg>
<div class="a" style="left:1862px;top:468px;width:9px;height:314px;background:#2a2a2a"></div>
<div class="a" style="left:1863px;top:470px;width:7px;height:105px;border-radius:3px;background:#5d5d5d"></div>
<svg class="a" style="left:1668px;top:784px" width="210" height="18" viewBox="1668 784 210 18"><g fill="none" stroke="#e0e0e0" stroke-width="1.2">
<path d="M1672 793 L1679 797 L1686 793 M1672 790 L1679 794 L1686 790"/><path d="M1672 787 L1679 784 L1686 787 L1679 791 Z" fill="#555"/>
<path d="M1690 799 L1698 791 M1696 788 L1702 794" stroke-width="2"/><circle cx="1700" cy="789" r="1.5" fill="#e0e0e0"/>
<rect x="1709.5" y="786.5" width="9" height="9" fill="#666"/><rect x="1713.5" y="790.5" width="9" height="9"/>
<rect x="1734.5" y="786.5" width="13" height="13" rx="2"/><circle cx="1741" cy="793" r="4.5" fill="#e0e0e0"/>
<rect x="1762.5" y="792.5" width="10" height="7" fill="#e0e0e0"/><path d="M1765 792 V789 C1765 786 1770 786 1770 789 V792"/>
</g><g fill="#e0e0e0"><rect x="1859" y="787" width="12" height="2"/><rect x="1862" y="785" width="6" height="2"/><path d="M1860 790 H1870 L1869 801 H1861 Z"/></g><g stroke="#3a3a3a"><path d="M1863 791 V799 M1865 791 V799 M1867 791 V799"/></g></svg>
<div class="a" style="left:1763px;top:805px;width:4px;height:4px;border-radius:50%;background:#ccc"></div>
<div class="a" style="left:1771px;top:805px;width:4px;height:4px;border-radius:50%;background:#ccc"></div>
<div class="a" style="left:1779px;top:805px;width:4px;height:4px;border-radius:50%;background:#ccc"></div>

</body></html>
